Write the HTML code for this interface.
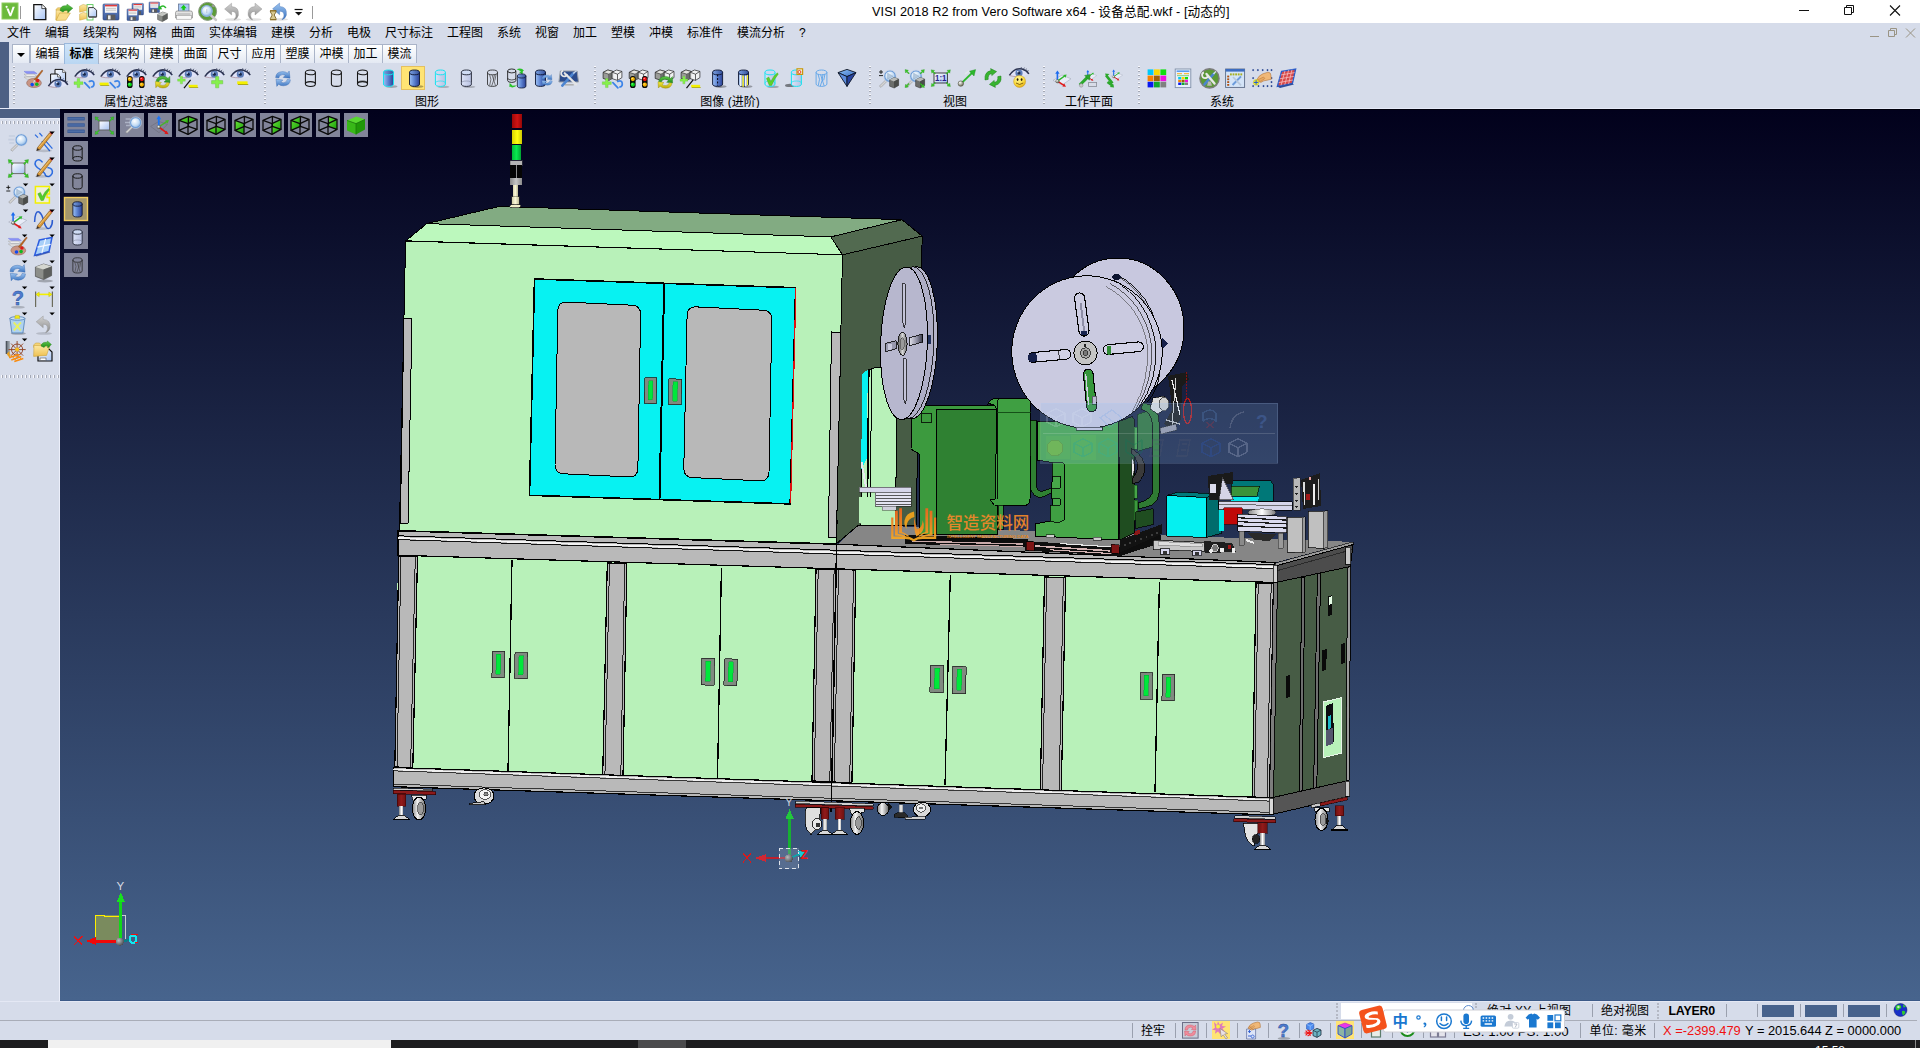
<!DOCTYPE html>
<html lang="zh-CN">
<head>
<meta charset="utf-8">
<title>VISI 2018 R2 from Vero Software x64 - 设备总配.wkf - [动态的]</title>
<style>
html,body{margin:0;padding:0;}
body{width:1920px;height:1048px;position:relative;overflow:hidden;background:#d6dcea;
 font-family:"Liberation Sans","Noto Sans CJK SC",sans-serif;font-size:12px;color:#000;}
.abs{position:absolute;}
#titlebar{position:absolute;left:0;top:0;width:1920px;height:23px;background:#fff;}
#title{position:absolute;left:872px;top:4px;width:358px;height:17px;line-height:17px;font-size:12.68px;white-space:nowrap;letter-spacing:0.1px;}
#menubar{position:absolute;left:0;top:23px;width:1920px;height:20px;background:#d6dcea;}
#menubar span{position:absolute;top:2px;height:16px;line-height:16px;font-size:12px;white-space:nowrap;}
#leftstrip{position:absolute;left:0;top:42px;width:9px;height:67px;background:#4d6084;}
#leftstrip2{position:absolute;left:0;top:109px;width:60px;height:9px;background:#4d6084;}
#tabs{position:absolute;left:12px;top:44px;height:20px;}
.tab{position:absolute;top:44px;height:19px;border:1px solid #aab4c8;border-bottom:none;background:linear-gradient(#ffffff,#e4e9f3);font-size:12px;line-height:19px;text-align:center;box-sizing:border-box;white-space:nowrap;}
.tab.sel{background:linear-gradient(#cfe4f9,#b9d6f2);border-color:#9ab8dc;top:43px;height:21px;line-height:20px;font-weight:bold;}
#ribbon{position:absolute;left:12px;top:64px;width:1908px;height:44px;background:#d6dcea;}
.glabel{position:absolute;top:94.5px;height:15px;line-height:15px;font-size:12px;text-align:center;white-space:nowrap;}
.gsep{position:absolute;top:66px;width:2px;height:40px;background:repeating-linear-gradient(180deg,#f8f8fc 0,#f8f8fc 1px,#a4a8b4 1px,#a4a8b4 2.500px,transparent 2.500px,transparent 4px);}
#viewport{position:absolute;left:60px;top:109px;width:1860px;height:892px;background:linear-gradient(#02011c 0%,#47648d 100%);overflow:hidden;box-sizing:border-box;border-top:1px solid #00000c;border-bottom:1px solid #3c5a88;}
#vline{position:absolute;left:0;top:108px;width:1920px;height:1px;background:#e6eaf8;}
#leftpanel{position:absolute;left:0;top:118px;width:60px;height:883px;background:#d6dcea;border-top:1px solid #e4e8f6;border-right:1px solid #eceffa;box-sizing:border-box;}
.grip{position:absolute;left:1px;width:58px;height:3px;background:repeating-linear-gradient(90deg,#f8f8fc 0,#f8f8fc 1px,#a4a8b4 1px,#a4a8b4 2.500px,transparent 2.500px,transparent 4px);}
#status{position:absolute;left:0;top:1001px;width:1920px;height:39px;background:#d6dcea;}
#statusin{position:absolute;left:0;top:-1px;width:1920px;height:40px;}
#taskbar{position:absolute;left:0;top:1040px;width:1920px;height:8px;background:#1d1d1f;}
.vt{position:absolute;width:24px;height:24px;background:#82859a;}
svg{display:block;}
</style>
</head>
<body>
<div id="titlebar"><div id="title">VISI 2018 R2 from Vero Software x64 - 设备总配.wkf - [动态的]</div></div>
<div id="menubar"><span style="left:7px">文件</span><span style="left:45px">编辑</span><span style="left:83px">线架构</span><span style="left:133px">网格</span><span style="left:171px">曲面</span><span style="left:209px">实体编辑</span><span style="left:271px">建模</span><span style="left:309px">分析</span><span style="left:347px">电极</span><span style="left:385px">尺寸标注</span><span style="left:447px">工程图</span><span style="left:497px">系统</span><span style="left:535px">视窗</span><span style="left:573px">加工</span><span style="left:611px">塑模</span><span style="left:649px">冲模</span><span style="left:687px">标准件</span><span style="left:737px">模流分析</span><span style="left:799px">?</span></div>
<div id="leftstrip"></div><div id="leftstrip2"></div>
<div class="tab" style="left:12px;width:18px"><svg width="16" height="18" viewBox="0 0 16 18"><path d="M4 8h8l-4 4z" fill="#000"/></svg></div>
<div class="tab" style="left:30px;width:35px">编辑</div>
<div class="tab sel" style="left:64px;width:35px">标准</div>
<div class="tab" style="left:98px;width:47px">线架构</div>
<div class="tab" style="left:144px;width:35px">建模</div>
<div class="tab" style="left:178px;width:35px">曲面</div>
<div class="tab" style="left:212px;width:35px">尺寸</div>
<div class="tab" style="left:246px;width:35px">应用</div>
<div class="tab" style="left:280px;width:35px">塑膜</div>
<div class="tab" style="left:314px;width:35px">冲模</div>
<div class="tab" style="left:348px;width:35px">加工</div>
<div class="tab" style="left:382px;width:35px">模流</div>
<div id="ribbon"></div>
<div class="glabel" style="left:76px;width:120px">属性/过滤器</div>
<div class="glabel" style="left:367px;width:120px">图形</div>
<div class="glabel" style="left:670px;width:120px">图像 (进阶)</div>
<div class="glabel" style="left:895px;width:120px">视图</div>
<div class="glabel" style="left:1029px;width:120px">工作平面</div>
<div class="glabel" style="left:1162px;width:120px">系统</div>
<div class="gsep" style="left:13px"></div>
<div class="gsep" style="left:264px"></div>
<div class="gsep" style="left:594px"></div>
<div class="gsep" style="left:869px"></div>
<div class="gsep" style="left:1043px"></div>
<div class="gsep" style="left:1138px"></div>
<div id="vline"></div>
<div id="leftpanel"><div class="grip" style="top:2px"></div><div class="grip" style="top:255.5px"></div></div>
<div id="viewport">
<svg id="model" width="1920" height="1048" viewBox="0 0 1920 1048" style="position:absolute;left:-60px;top:-110px" shape-rendering="crispEdges">
<defs>
<linearGradient id="redg" x1="0" x2="1"><stop offset="0" stop-color="#6a1010"/><stop offset="0.5" stop-color="#921a1a"/><stop offset="1" stop-color="#701212"/></linearGradient>
<linearGradient id="stemg" x1="0" x2="1"><stop offset="0" stop-color="#999"/><stop offset="0.5" stop-color="#fff"/><stop offset="1" stop-color="#aaa"/></linearGradient>
<linearGradient id="whg" x1="0" x2="1"><stop offset="0" stop-color="#8a8a8a"/><stop offset="0.4" stop-color="#f4f4f4"/><stop offset="1" stop-color="#6a6a6a"/></linearGradient>
<linearGradient id="axg" x1="0" x2="1"><stop offset="0" stop-color="#e8e8f2"/><stop offset="0.6" stop-color="#8c8ca0"/><stop offset="1" stop-color="#3a3a48"/></linearGradient>
<linearGradient id="hubg" x1="0" x2="1"><stop offset="0" stop-color="#555"/><stop offset="0.5" stop-color="#d8d8d8"/><stop offset="1" stop-color="#666"/></linearGradient>
<linearGradient id="rollg" x1="0" x2="1"><stop offset="0" stop-color="#888"/><stop offset="0.5" stop-color="#fff"/><stop offset="1" stop-color="#777"/></linearGradient>
<linearGradient id="tred" x1="0" x2="1"><stop offset="0" stop-color="#a00808"/><stop offset="0.5" stop-color="#d01414"/><stop offset="1" stop-color="#900606"/></linearGradient>
<linearGradient id="tyel" x1="0" x2="1"><stop offset="0" stop-color="#d8d400"/><stop offset="0.5" stop-color="#ffff10"/><stop offset="1" stop-color="#c8c400"/></linearGradient>
<linearGradient id="tgrn" x1="0" x2="1"><stop offset="0" stop-color="#00b838"/><stop offset="0.5" stop-color="#08e850"/><stop offset="1" stop-color="#00a030"/></linearGradient>
<linearGradient id="tgry" x1="0" x2="1"><stop offset="0" stop-color="#888"/><stop offset="0.5" stop-color="#c8c8c8"/><stop offset="1" stop-color="#888"/></linearGradient>
<linearGradient id="tcrm" x1="0" x2="1"><stop offset="0" stop-color="#cfcba4"/><stop offset="0.5" stop-color="#fbf8d8"/><stop offset="1" stop-color="#bfbb98"/></linearGradient>
<linearGradient id="wmg" x1="0" x2="0" y1="0" y2="1"><stop offset="0" stop-color="#f07020"/><stop offset="1" stop-color="#f5a820"/></linearGradient>
<linearGradient id="wmg2" gradientUnits="userSpaceOnUse" x1="0" y1="508" x2="0" y2="540"><stop offset="0" stop-color="#f0641c"/><stop offset="0.6" stop-color="#f28a20"/><stop offset="1" stop-color="#f6ac24"/></linearGradient>
<radialGradient id="sph" cx="0.35" cy="0.35" r="0.7"><stop offset="0" stop-color="#b8bcc0"/><stop offset="1" stop-color="#4a4e54"/></radialGradient>
</defs>
<polygon points="837.8,544.3 858.6,525 1353,541.9 1275,562.5" fill="#868686"/>
<polygon points="842.5,254.8 922.2,236.1 916,525 858.6,525 836.3,543.8" fill="#475c45" stroke="#000" stroke-width="1"/>
<path d="M861 525 L863 385 Q863.5 368 880 367 L897 367 L895.6 525 Z" fill="#b8f1b9" stroke="#000" stroke-width="1"/>
<polygon points="862.2,374 867.8,369.5 866.7,459 861.2,470" fill="#07f2f2"/>
<polyline points="868.8,369 867.5,500" fill="none" stroke="#000" stroke-width="1.6"/>
<polyline points="871.6,368 870.4,497" fill="none" stroke="#000" stroke-width="1"/>
<polygon points="859,497 889,497 889,523.4 858.7,523.4" fill="#b8f1b9"/>
<rect x="859" y="487" width="52" height="5" fill="#d6d6ea" stroke="#333" stroke-width="0.6"/>
<rect x="875" y="492" width="36" height="14" fill="#e4e4f2" stroke="#222" stroke-width="0.6"/>
<polyline points="876,495 911,495" fill="none" stroke="#333" stroke-width="0.8"/>
<polyline points="876,498 911,498" fill="none" stroke="#333" stroke-width="0.8"/>
<polyline points="876,501 911,501" fill="none" stroke="#333" stroke-width="0.8"/>
<polyline points="876,504 911,504" fill="none" stroke="#333" stroke-width="0.8"/>
<rect x="882" y="506" width="14" height="4" fill="#d0d0dc" stroke="#444" stroke-width="0.5"/>
<polyline points="861.5,462 866,487" fill="none" stroke="#e8e8f0" stroke-width="2"/>
<polygon points="499.4,206.4 901.9,219.7 830.8,236.9 426.7,223.6" fill="#82ab82" stroke="#000" stroke-width="1"/>
<polygon points="426.7,223.6 830.8,236.9 842.5,254.8 405.8,240.8" fill="#bcf8bd" stroke="#000" stroke-width="1"/>
<polygon points="830.8,236.9 901.9,219.7 922.2,236.1 842.5,254.8" fill="#526a50" stroke="#000" stroke-width="1"/>
<polygon points="405.6,241 842.5,254.8 836.3,543.8 399.4,530.5" fill="#b8f1b9" stroke="#000" stroke-width="1"/>
<polygon points="404,318 412,318.3 408,523.6 400.3,523.4" fill="#b9b9b9" stroke="#000" stroke-width="1"/>
<polygon points="831.5,332 841,332.3 836.4,537.5 828.4,537.3" fill="#b9b9b9" stroke="#000" stroke-width="1"/>
<polygon points="534.5,279 795.6,287.7 790.2,503.9 529.5,495.3" fill="#07f2f2" stroke="#000" stroke-width="1.6"/>
<polyline points="795.9,288 790.6,503.5" fill="none" stroke="#e01010" stroke-width="1.2"/>
<polyline points="664.2,283.3 659.5,499.6" fill="none" stroke="#000" stroke-width="2"/>
<path d="M557.8 310.7 Q558.0 301.7 567.0 302.1 L631.8 305.2 Q640.8 305.6 640.6 314.6 L637.9 468.3 Q637.7 477.3 628.7 476.9 L563.8 473.8 Q554.8 473.4 555.0 464.4 Z" fill="#b8b8b8" stroke="#000" stroke-width="1"/>
<path d="M687.1 315.4 Q687.3 306.4 696.3 306.9 L763.0 310.2 Q772.0 310.7 771.8 319.7 L769.0 472.2 Q768.8 481.2 759.8 480.8 L692.6 477.6 Q683.6 477.2 683.8 468.2 Z" fill="#b8b8b8" stroke="#000" stroke-width="1"/>
<polygon points="644.8,377.5 656.8,377.9 656.3,403.8 644.3,403.4" fill="#808a80" stroke="#222" stroke-width="0.8"/>
<polygon points="648.64,380.5 652.96,380.5 652.46,399.8 648.14,399.8" fill="#00e83a" stroke="#0a3" stroke-width="0.5"/>
<polygon points="669,378.8 681.8,379.2 681.3,405 668.5,404.6" fill="#808a80" stroke="#222" stroke-width="0.8"/>
<polygon points="673.096,381.8 677.704,381.8 677.204,401 672.596,401" fill="#00e83a" stroke="#0a3" stroke-width="0.5"/>
<polygon points="398,553.2 1273,580.413 1270,799.722 394.5,769.517" fill="#b8f1b9"/>
<polyline points="512,560 508,772" fill="none" stroke="#000" stroke-width="1.3"/>
<polyline points="721.4,568 717.5,778" fill="none" stroke="#000" stroke-width="1.3"/>
<polyline points="950.3,575 945,785" fill="none" stroke="#000" stroke-width="1.3"/>
<polyline points="1159.4,582 1155,792" fill="none" stroke="#000" stroke-width="1.3"/>
<polygon points="398.75,556 417.5,556.5 412.8,767.5 394.8,767" fill="#b9b9b9" stroke="#000" stroke-width="1.2"/>
<polyline points="400.95,556 397,767" fill="none" stroke="#000" stroke-width="0.8"/>
<polyline points="415.3,556 410.6,767" fill="none" stroke="#000" stroke-width="0.8"/>
<polygon points="607.3,563 626.9,563.5 623,776.5 602.7,776" fill="#b9b9b9" stroke="#000" stroke-width="1.2"/>
<polyline points="609.5,563 604.9,776" fill="none" stroke="#000" stroke-width="0.8"/>
<polyline points="624.7,563 620.8,776" fill="none" stroke="#000" stroke-width="0.8"/>
<polygon points="816,569 836.3,569.5 832,781.5 812,781" fill="#b9b9b9" stroke="#000" stroke-width="1.2"/>
<polyline points="818.2,569 814.2,781" fill="none" stroke="#000" stroke-width="0.8"/>
<polyline points="834.1,569 829.8,781" fill="none" stroke="#000" stroke-width="0.8"/>
<polygon points="836.3,569.5 855.8,570 851.9,782.5 832,782" fill="#b9b9b9" stroke="#000" stroke-width="1.2"/>
<polyline points="838.5,569.5 834.2,782" fill="none" stroke="#000" stroke-width="0.8"/>
<polyline points="853.6,569.5 849.7,782" fill="none" stroke="#000" stroke-width="0.8"/>
<polygon points="1044.5,577 1065.6,577.5 1061.3,790.5 1040.3,790" fill="#b9b9b9" stroke="#000" stroke-width="1.2"/>
<polyline points="1046.7,577 1042.5,790" fill="none" stroke="#000" stroke-width="0.8"/>
<polyline points="1063.4,577 1059.1,790" fill="none" stroke="#000" stroke-width="0.8"/>
<polygon points="1256,583 1273.4,583.5 1269.5,797.5 1252.3,797" fill="#b9b9b9" stroke="#000" stroke-width="1.2"/>
<polyline points="1258.2,583 1254.5,797" fill="none" stroke="#000" stroke-width="0.8"/>
<polyline points="1271.2,583 1267.3,797" fill="none" stroke="#000" stroke-width="0.8"/>
<polygon points="492.5,651 505,651.4 504.4,678 491.9,677.6" fill="#808a80" stroke="#222" stroke-width="0.8"/>
<polygon points="496.5,654 501,654 500.4,674 495.9,674" fill="#00e83a" stroke="#0a3" stroke-width="0.5"/>
<polygon points="515,652.5 527.6,652.9 527,678.8 514.4,678.4" fill="#808a80" stroke="#222" stroke-width="0.8"/>
<polygon points="519.032,655.5 523.568,655.5 522.968,674.8 518.432,674.8" fill="#00e83a" stroke="#0a3" stroke-width="0.5"/>
<polygon points="701.9,658 714.7,658.4 714.1,685.3 701.3,684.9" fill="#808a80" stroke="#222" stroke-width="0.8"/>
<polygon points="705.996,661 710.604,661 710.004,681.3 705.396,681.3" fill="#00e83a" stroke="#0a3" stroke-width="0.5"/>
<polygon points="724.5,658.8 737.5,659.2 736.9,685.8 723.9,685.4" fill="#808a80" stroke="#222" stroke-width="0.8"/>
<polygon points="728.66,661.8 733.34,661.8 732.74,681.8 728.06,681.8" fill="#00e83a" stroke="#0a3" stroke-width="0.5"/>
<polygon points="930.5,665 943.9,665.4 943.3,692.8 929.9,692.4" fill="#808a80" stroke="#222" stroke-width="0.8"/>
<polygon points="934.788,668 939.612,668 939.012,688.8 934.188,688.8" fill="#00e83a" stroke="#0a3" stroke-width="0.5"/>
<polygon points="953,666.2 966.2,666.6 965.6,694 952.4,693.6" fill="#808a80" stroke="#222" stroke-width="0.8"/>
<polygon points="957.224,669.2 961.976,669.2 961.376,690 956.624,690" fill="#00e83a" stroke="#0a3" stroke-width="0.5"/>
<polygon points="1140.6,672.3 1152.6,672.7 1152,699.5 1140,699.1" fill="#808a80" stroke="#222" stroke-width="0.8"/>
<polygon points="1144.44,675.3 1148.76,675.3 1148.16,695.5 1143.84,695.5" fill="#00e83a" stroke="#0a3" stroke-width="0.5"/>
<polygon points="1162.5,674 1175,674.4 1174.4,701 1161.9,700.6" fill="#808a80" stroke="#222" stroke-width="0.8"/>
<polygon points="1166.5,677 1171,677 1170.4,697 1165.9,697" fill="#00e83a" stroke="#0a3" stroke-width="0.5"/>
<polygon points="398,530.939 836.5,544.313 838,544.3 1275,562.5 1275.5,582.49 398,555.2" fill="#b9b9b9" stroke="#000" stroke-width="1.2"/>
<polyline points="398,535.8 1275,564.629" fill="none" stroke="#000" stroke-width="1"/>
<polyline points="398,538 1275,567.029" fill="none" stroke="#f4f4f4" stroke-width="1.8"/>
<polyline points="398,539.6 1275,568.629" fill="none" stroke="#000" stroke-width="0.9"/>
<polygon points="393.5,767.483 1271,797.756 1271.5,814.868 393.5,786.684" fill="#b9b9b9" stroke="#000" stroke-width="1.2"/>
<polyline points="393.5,769.483 1271,799.756" fill="none" stroke="#f0f0f0" stroke-width="1.4"/>
<polyline points="393.5,770.883 1271,801.156" fill="none" stroke="#000" stroke-width="0.7"/>
<polyline points="393.5,784.184 1271,812.352" fill="none" stroke="#000" stroke-width="0.7"/>
<polyline points="837,520 831,812" fill="none" stroke="#000" stroke-width="1.2"/>
<polygon points="1275,563.2 1353,541.9 1353,545.2 1275.3,566.3" fill="#9a9a9a" stroke="#000" stroke-width="0.6"/>
<polygon points="1275.3,566 1353,544.6 1350.3,566.5 1276.6,582.3" fill="#4c4c4c" stroke="#000" stroke-width="1"/>
<polyline points="1276,571 1352,549.6" fill="none" stroke="#2a2a2a" stroke-width="1"/>
<polygon points="1276.6,582.3 1350.3,566.5 1348.4,780.5 1272,797.7" fill="#475c45" stroke="#000" stroke-width="1"/>
<polygon points="1301.8,577.5 1305,576.6 1302,791 1299.2,791.8" fill="#6e6e6e" stroke="#000" stroke-width="1"/>
<polygon points="1317.4,574 1320.6,573 1316.8,787.5 1313.6,788.4" fill="#6e6e6e" stroke="#000" stroke-width="1"/>
<polygon points="1347.5,567 1350.8,566.3 1349,780.4 1346,781.2" fill="#9c9c9c" stroke="#000" stroke-width="0.9"/>
<polygon points="1273.4,583 1277.5,582.2 1273.5,797.4 1269.5,797.6" fill="#7d7d7d" stroke="#000" stroke-width="0.9"/>
<polygon points="1271.9,797.7 1348.4,780.5 1347.7,796.9 1272,814.5" fill="#555" stroke="#000" stroke-width="1"/>
<rect x="1345.5" y="547" width="5" height="17" fill="#c9c9c9" stroke="#000" stroke-width="0.7"/>
<rect x="1345" y="781" width="4.5" height="15" fill="#c9c9c9" stroke="#000" stroke-width="0.7"/>
<rect x="1269" y="798" width="4" height="16" fill="#d8d8d8" stroke="#000" stroke-width="0.7"/>
<rect x="1273" y="565" width="4" height="17" fill="#d0d0d0" stroke="#000" stroke-width="0.7"/>
<polygon points="1323.4,702 1341.6,697.6 1341.6,753 1323.4,757.8" fill="#b8f1b9" stroke="#e8f4e8" stroke-width="1"/>
<polygon points="1326,706 1333,703 1334,742 1326.5,745" fill="#0c0c10"/>
<polygon points="1328,716 1331,715 1331,728 1328,729" fill="#19b8c8"/>
<polygon points="1326,730 1332.5,728 1332.5,744 1326,746" fill="#54566e"/>
<polygon points="1328.5,596 1332.5,595 1331.5,615 1327.5,616" fill="#0a0a0a"/>
<polygon points="1329.3,597 1331.8,596.4 1331.5,604 1329.3,604.6" fill="#e8ffe8"/>
<polygon points="1322.5,650 1327,649 1326,670 1321.8,671" fill="#0a0a0a"/>
<polygon points="1341,644 1345,643 1344.5,663 1340.5,664" fill="#0a0a0a"/>
<polygon points="1286,676 1290,675 1289.5,697 1285.5,698" fill="#0a0a0a"/>
<polygon points="393,788 432,789.3 432,791 393,790" fill="#cfcfcf" stroke="#000" stroke-width="0.6"/>
<polygon points="393,790.3 435.5,791.575 435.5,794.875 393,793.6" fill="#8c1a1a" stroke="#200" stroke-width="0.6"/>
<rect x="397" y="794" width="8.8" height="12" fill="url(#redg)" stroke="#300" stroke-width="0.5"/>
<rect x="399.464" y="806" width="3.872" height="9" fill="url(#stemg)"/>
<polygon points="394,819 398.76,815 404.04,815 408.8,819" fill="#d8d8d8" stroke="#000" stroke-width="0.8"/>
<polyline points="393,819.5 409.8,819.5" fill="none" stroke="#000" stroke-width="1.4"/>
<path d="M411 795 h15 v4 h-3 v3 h-9 z" fill="#e2e2e2" stroke="#000" stroke-width="0.7"/>
<ellipse cx="419" cy="808.5" rx="6.6" ry="11.5" fill="url(#whg)" stroke="#000" stroke-width="1"/>
<ellipse cx="420.5" cy="808.5" rx="2.97" ry="6.325" fill="#9a9a9a" stroke="#222" stroke-width="0.6"/>
<ellipse cx="484" cy="796" rx="10" ry="8.2" fill="#dcdcdc" stroke="#000" stroke-width="1"/>
<ellipse cx="485" cy="794.5" rx="5.8" ry="4.8" fill="#f4f4f4" stroke="#333" stroke-width="0.8"/>
<ellipse cx="486" cy="794" rx="2.2" ry="2" fill="#888" stroke="#222" stroke-width="0.5"/>
<polygon points="469.5,803.3 484,801.5 486,804.5 470,805" fill="#c8c8c8" stroke="#000" stroke-width="0.8"/>
<polygon points="795.5,801 873,803.8 873,806 795.5,803.6" fill="#d0d0d0" stroke="#000" stroke-width="0.6"/>
<polygon points="795,804.2 873,806.54 873,809.34 795,807" fill="#8c1a1a" stroke="#200" stroke-width="0.6"/>
<path d="M806 807.5 h14 v5 q1 14 -9 22 q-7 -6 -6 -20 z" fill="#dedede" stroke="#000" stroke-width="0.8"/>
<ellipse cx="817" cy="824" rx="4.5" ry="6" fill="#e8e8e8" stroke="#000" stroke-width="0.8"/>
<ellipse cx="818" cy="825" rx="2" ry="2.6" fill="#333"/>
<rect x="821" y="807.6" width="7.8" height="11.5" fill="url(#redg)" stroke="#300" stroke-width="0.5"/>
<rect x="823.184" y="819.1" width="3.432" height="11" fill="url(#stemg)"/>
<polygon points="818,834.1 822.56,830.1 827.24,830.1 831.8,834.1" fill="#d8d8d8" stroke="#000" stroke-width="0.8"/>
<polyline points="817,834.6 832.8,834.6" fill="none" stroke="#000" stroke-width="1.4"/>
<rect x="835" y="807.6" width="9" height="11.5" fill="url(#redg)" stroke="#300" stroke-width="0.5"/>
<rect x="837.52" y="819.1" width="3.96" height="11" fill="url(#stemg)"/>
<polygon points="832,834.1 836.8,830.1 842.2,830.1 847,834.1" fill="#d8d8d8" stroke="#000" stroke-width="0.8"/>
<polyline points="831,834.6 848,834.6" fill="none" stroke="#000" stroke-width="1.4"/>
<path d="M849 808 h15 v4 h-3 v3 h-9 z" fill="#e2e2e2" stroke="#000" stroke-width="0.7"/>
<ellipse cx="857" cy="823" rx="6.6" ry="11.5" fill="url(#whg)" stroke="#000" stroke-width="1"/>
<ellipse cx="858.5" cy="823" rx="2.97" ry="6.325" fill="#9a9a9a" stroke="#222" stroke-width="0.6"/>
<ellipse cx="883" cy="809" rx="5.6" ry="6.5" fill="url(#whg)" stroke="#000" stroke-width="0.9"/>
<polygon points="888,803 893,807 888,811" fill="#111"/>
<rect x="899.3" y="804.5" width="3.6" height="8.5" fill="#e0e0e0" stroke="#666" stroke-width="0.4"/>
<polygon points="894,814.7 898,812.5 904,812.5 907.5,815.5 907.5,817.8 894,817.4" fill="#2a2a2a" stroke="#000" stroke-width="0.6"/>
<ellipse cx="922" cy="809.5" rx="8.6" ry="7.4" fill="#dadada" stroke="#000" stroke-width="1"/>
<ellipse cx="921" cy="808" rx="4.8" ry="4.2" fill="#f2f2f2" stroke="#333" stroke-width="0.8"/>
<ellipse cx="921" cy="808" rx="1.8" ry="1.6" fill="#777"/>
<polygon points="905,817.5 925,816 925,819 905,819.4" fill="#d0d0d0" stroke="#000" stroke-width="0.6"/>
<polygon points="1234.5,815.5 1275,817 1275,819.4 1234.5,818" fill="#d0d0d0" stroke="#000" stroke-width="0.6"/>
<polygon points="1233.6,818.6 1275.8,819.866 1275.8,822.866 1233.6,821.6" fill="#8c1a1a" stroke="#200" stroke-width="0.6"/>
<path d="M1243 823 h16 v5 q0 6 -4 8 l-1 10 q-9 -4 -9.5 -17 z" fill="#e4e4e4" stroke="#000" stroke-width="0.8"/>
<ellipse cx="1256" cy="839" rx="3.6" ry="4.4" fill="#222" stroke="#000" stroke-width="0.6"/>
<rect x="1257.8" y="822.7" width="9.4" height="10.5" fill="url(#redg)" stroke="#300" stroke-width="0.5"/>
<rect x="1260.43" y="833.2" width="4.136" height="12" fill="url(#stemg)"/>
<polygon points="1254.8,849.2 1259.68,845.2 1265.32,845.2 1270.2,849.2" fill="#d8d8d8" stroke="#000" stroke-width="0.8"/>
<polyline points="1253.8,849.7 1271.2,849.7" fill="none" stroke="#000" stroke-width="1.4"/>
<polygon points="1311,805 1347.5,796.5 1347.5,799.5 1311,808" fill="#c9c9c9" stroke="#000" stroke-width="0.6"/>
<polygon points="1320,803 1347,797 1347,800 1320,806" fill="#8c1a1a" stroke="#200" stroke-width="0.5"/>
<path d="M1314 807.5 h15 v4 h-3 v3 h-9 z" fill="#e2e2e2" stroke="#000" stroke-width="0.7"/>
<ellipse cx="1321.5" cy="819.5" rx="6.5" ry="11" fill="url(#whg)" stroke="#000" stroke-width="1"/>
<ellipse cx="1323" cy="819.5" rx="2.925" ry="6.05" fill="#9a9a9a" stroke="#222" stroke-width="0.6"/>
<polygon points="1326,818 1330,821 1326,824" fill="#111"/>
<rect x="1335" y="805.5" width="8.8" height="10" fill="url(#redg)" stroke="#300" stroke-width="0.5"/>
<rect x="1337.46" y="815.5" width="3.872" height="10" fill="url(#stemg)"/>
<polygon points="1332,829.5 1336.76,825.5 1342.04,825.5 1346.8,829.5" fill="#d8d8d8" stroke="#000" stroke-width="0.8"/>
<polyline points="1331,830 1347.8,830" fill="none" stroke="#000" stroke-width="1.4"/>
<polygon points="905,535 1028,539 1028,547 905,544" fill="#0c0c0c"/>
<polyline points="912,541.2 1023,544" fill="none" stroke="#c9a9a9" stroke-width="1.4"/>
<polyline points="940,544.5 1023,546.6" fill="none" stroke="#c9a9a9" stroke-width="1"/>
<path d="M912 414 L912.5 405.5 L997 405 L997 534.5 L935 534.5 L919 534 L919 454 L911 449 L911.5 432 Z" fill="#3c9a3e" stroke="#000" stroke-width="1"/>
<polygon points="936,409 997,409 997,534.5 936,534.5" fill="#2f8132" stroke="#000" stroke-width="1"/>
<rect x="921.5" y="413" width="10" height="9" fill="#3c9a3e" stroke="#000" stroke-width="0.8"/>
<polyline points="936,409 936,534" fill="none" stroke="#000" stroke-width="1"/>
<path d="M988 404 Q990 398.5 998 398 L1029 398 Q1031 399 1031 404 L1030 500 Q1029 505.5 1024 505.5 L994 505 L990.5 500 L995 499 L997 410 Q995 403 988 404 Z" fill="#3f9f42" stroke="#000" stroke-width="1"/>
<polyline points="998,398.5 997,499" fill="none" stroke="#000" stroke-width="0.9"/>
<polyline points="997,412 1031,412.5" fill="none" stroke="#0b3d0e" stroke-width="0.8"/>
<rect x="998" y="505" width="5" height="24" fill="#3c9a3e" stroke="#000" stroke-width="0.7"/>
<polygon points="1025,541 1118,547 1161,534.5 1161,543 1120,556 1025,550.5" fill="#0e0e0e"/>
<polyline points="1035,546 1110,550.8" fill="none" stroke="#d5b5b5" stroke-width="1.6"/>
<polyline points="1050,549.8 1112,553.6" fill="none" stroke="#d5b5b5" stroke-width="1.1"/>
<polyline points="1060,543.6 1113,547" fill="none" stroke="#e8e8e8" stroke-width="1.1"/>
<polygon points="1026,541.5 1034,542 1034,550.8 1026,550.3" fill="#7d1414" stroke="#000" stroke-width="0.6"/>
<polygon points="1111,544.2 1119,544.8 1119,553.6 1111,553" fill="#7d1414" stroke="#000" stroke-width="0.6"/>
<polygon points="1134,532 1140,530.5 1140,534.5 1134,536" fill="#7d1414"/>
<polygon points="1118.6,421.5 1132.5,416.5 1134,419 1134,533 1120,540" fill="#1f4d20" stroke="#000" stroke-width="0.9"/>
<rect x="1134" y="427" width="3.4" height="22" fill="#46a548" stroke="#0a3a0c" stroke-width="0.5"/>
<rect x="1134" y="485" width="3.2" height="13" fill="#46a548" stroke="#0a3a0c" stroke-width="0.5"/>
<rect x="1134" y="500" width="3.6" height="20" fill="#3c9a3e" stroke="#0a3a0c" stroke-width="0.5"/>
<polygon points="1135.7,512 1153,508.5 1153,524.5 1135.7,528.5" fill="#1f4d20" stroke="#000" stroke-width="0.7"/>
<polygon points="1120,540 1161.5,524.3 1161.5,534 1120,552.5" fill="#121212"/>
<rect x="1124" y="544.4" width="1.6" height="1.6" fill="#3c3c3c"/>
<rect x="1129.4" y="542.35" width="1.6" height="1.6" fill="#3c3c3c"/>
<rect x="1134.8" y="540.3" width="1.6" height="1.6" fill="#3c3c3c"/>
<rect x="1140.2" y="538.25" width="1.6" height="1.6" fill="#3c3c3c"/>
<rect x="1145.6" y="536.2" width="1.6" height="1.6" fill="#3c3c3c"/>
<rect x="1151" y="534.15" width="1.6" height="1.6" fill="#3c3c3c"/>
<rect x="1156.4" y="532.1" width="1.6" height="1.6" fill="#3c3c3c"/>
<polygon points="1134.5,531.4 1140,529.6 1140,534 1134.5,535.8" fill="#8c1818"/>
<path d="M1030 420 L1036 420 L1036 486 Q1038 494 1046 490 L1051 488 L1051 493 Q1036 503 1031 490 Z" fill="#2f8132" stroke="#000" stroke-width="0.8"/>
<path d="M1037 421 L1118.6 421.5 L1118.6 540 L1035.3 536 L1035.3 524 L1050 521 L1050 505.4 L1052 505.4 L1052 498.6 L1051.6 488 L1052.4 476 L1052.4 462.5 L1037 460 Z" fill="#47a649" stroke="#000" stroke-width="1"/>
<polygon points="1052.4,462.5 1062.5,462.8 1064.6,465 1064.4,520 1058,523 1050,521 1050,505.4 1060,505.4 1060,498.6 1051.6,498.6 1051.6,488 1060.4,488 1060.4,476 1052.4,476" fill="#3f9f42" stroke="#000" stroke-width="0.8"/>
<polyline points="1060.4,476 1060.4,488" fill="none" stroke="#000" stroke-width="0.7"/>
<polyline points="1060,498.6 1060,505.4" fill="none" stroke="#000" stroke-width="0.7"/>
<polyline points="1064.5,465 1064.4,520" fill="none" stroke="#000" stroke-width="0.8"/>
<rect x="1046" y="534.5" width="8" height="3" fill="#cfcfcf" stroke="#000" stroke-width="0.5"/>
<rect x="1093" y="537" width="8" height="3" fill="#cfcfcf" stroke="#000" stroke-width="0.5"/>
<rect x="1076" y="426.6" width="26" height="2.6" fill="#46a548" stroke="#000" stroke-width="0.6"/>
<polygon points="1137.5,414 1152.5,409 1152.5,446.5 1137.5,451" fill="#2f7435" stroke="#0a2a0c" stroke-width="0.8"/>
<path d="M1143 403 Q1158.6 404 1159 422 L1159.4 490 Q1159 504 1148 506.6 L1139 508.6 L1138 503 Q1153 500 1153 488 L1152.6 426 Q1152 412 1141 409 Z" fill="#2f7a33" stroke="#000" stroke-width="0.8"/>
<path d="M1131 448 Q1147 458 1145 470 Q1143 481 1133 484 L1132 479 Q1139 472 1137 462 Q1135 455 1131 453 Z" fill="#3a3a3a" stroke="#000" stroke-width="0.8"/>
<path d="M1131.6 457 Q1137 466 1132 478 Z" fill="#e8e8e8" stroke="#222" stroke-width="0.5"/>
<g transform="rotate(2 908 343)">
<ellipse cx="914" cy="342.5" rx="23.3" ry="76" fill="#b4b4cb" stroke="#000" stroke-width="1"/>
<ellipse cx="910.5" cy="342.5" rx="23.3" ry="76" fill="#aeaec6" stroke="#000" stroke-width="0.8"/>
<ellipse cx="904" cy="343.5" rx="23.4" ry="76.3" fill="#b7b7ce" stroke="#000" stroke-width="1"/>
</g>
<path d="M902.2 284 q1.6 -1.5 3 0 l0.6 38 l-1.4 6 l-1.6 -6 z" fill="#c4c4d8" stroke="#000" stroke-width="0.7"/>
<path d="M903 359 q1.6 -1.8 3 0 l0.8 40 l-1.6 5 l-1.6 -5 z" fill="#c4c4d8" stroke="#000" stroke-width="0.7"/>
<polygon points="885.5,343 896,340.5 896,348.5 885.5,351.5" fill="#9898ae" stroke="#000" stroke-width="0.8"/>
<polygon points="887.5,344.6 892,343.5 892,349.2 887.5,350.4" fill="#c8c8dc"/>
<polygon points="909,337.8 922.5,334.2 922.5,342 909,346" fill="url(#axg)" stroke="#000" stroke-width="0.8"/>
<ellipse cx="902.5" cy="343.8" rx="4.6" ry="11.6" fill="url(#hubg)" stroke="#111" stroke-width="0.9"/>
<ellipse cx="902.3" cy="343.8" rx="2.2" ry="6" fill="#9a9a9a" stroke="#333" stroke-width="0.5"/>
<rect x="927.5" y="335" width="3.6" height="8.5" fill="#20305c"/>
<ellipse cx="1118" cy="328.5" rx="66" ry="70.5" fill="#c8c8df" stroke="#000" stroke-width="1"/>
<path d="M1116 274 Q1165 300 1160 370 Q1158 392 1147 402" fill="none" stroke="#000" stroke-width="0.9"/>
<path d="M1119 277 Q1162 303 1157 368 Q1155 388 1146 398" fill="none" stroke="#333" stroke-width="0.7"/>
<ellipse cx="1116.5" cy="277" rx="4.2" ry="3.2" fill="#0d1430"/>
<polygon points="1162,338 1168,343.5 1162,349" fill="#16204a"/>
<g transform="rotate(-8 1087 352)">
<ellipse cx="1087" cy="352" rx="75.2" ry="76.2" fill="#cacae0" stroke="#000" stroke-width="1"/>
</g>
<path d="M1113.500 280.500 Q1149 300 1155.500 344 Q1158.500 380 1139 407" fill="none" stroke="#000" stroke-width="0.9"/>
<path d="M1110 283.500 Q1145 303 1151.500 345 Q1154 380 1135.500 409.500" fill="none" stroke="#222" stroke-width="0.7"/>
<path d="M1106 286.500 Q1141 306 1147.500 346 Q1150 380 1132 412" fill="none" stroke="#444" stroke-width="0.6"/>
<line x1="1079.6" y1="298" x2="1084" y2="331" stroke="#000" stroke-width="11.2" stroke-linecap="round"/>
<line x1="1079.6" y1="298" x2="1084" y2="331" stroke="#cdcde2" stroke-width="9" stroke-linecap="round"/>
<line x1="1080.6" y1="303" x2="1084.2" y2="331" stroke="#8e8ea6" stroke-width="2"/>
<ellipse cx="1084" cy="333" rx="3.4" ry="2.2" fill="#18244e"/>
<line x1="1108" y1="349.6" x2="1138.5" y2="346.8" stroke="#000" stroke-width="10.8" stroke-linecap="round"/>
<line x1="1108" y1="349.6" x2="1138.5" y2="346.8" stroke="#d2d2e6" stroke-width="8.6" stroke-linecap="round"/>
<path d="M1110 346 a5 5 0 0 0 -1 9 l1 0 z" fill="#2f8a34"/>
<rect x="1107" y="345.6" width="3.6" height="8.6" fill="#2f8a34"/>
<line x1="1033" y1="357.4" x2="1066" y2="354.4" stroke="#000" stroke-width="10.8" stroke-linecap="round"/>
<line x1="1033" y1="357.4" x2="1066" y2="354.4" stroke="#d2d2e6" stroke-width="8.6" stroke-linecap="round"/>
<path d="M1032 353 q-5 1 -4.4 5.5 q0.8 3.6 5.6 3.2 l4 -0.5 l-1 -8.6 z" fill="#16204a"/>
<polyline points="1058,350.6 1060,359" fill="none" stroke="#000" stroke-width="0.7"/>
<line x1="1088.2" y1="374" x2="1091.6" y2="407" stroke="#000" stroke-width="10.8" stroke-linecap="round"/>
<line x1="1088.2" y1="374" x2="1091.6" y2="407" stroke="#35963a" stroke-width="8.6" stroke-linecap="round"/>
<line x1="1085.6" y1="374" x2="1088.6" y2="405" stroke="#cfcfe2" stroke-width="1.4"/>
<rect x="1092" y="396" width="4" height="8" fill="#bdbdd4" stroke="#000" stroke-width="0.5"/>
<ellipse cx="1085.5" cy="353" rx="11.6" ry="11.8" fill="#c4c4c4" stroke="#000" stroke-width="1"/>
<ellipse cx="1085.5" cy="353" rx="5.2" ry="5.2" fill="#a8a8a8" stroke="#222" stroke-width="0.8"/>
<ellipse cx="1085.5" cy="353" rx="2.6" ry="2.6" fill="#777" stroke="#111" stroke-width="0.6"/>
<rect x="1083.6" y="344.4" width="2.4" height="2.4" fill="#222"/>
<rect x="1076" y="427" width="26" height="3" fill="#cacae0" stroke="#000" stroke-width="0.6"/>
<polygon points="1153,398 1164,396 1166,408 1158,414 1150,409" fill="#dcdcdc" stroke="#000" stroke-width="0.7"/>
<ellipse cx="1164" cy="404" rx="5" ry="7" fill="#cfcfcf" stroke="#222" stroke-width="0.7"/>
<polygon points="1168,376 1187,372 1189,380 1182,386 1181,420 1170,428 1164,424 1172,410 1170,390" fill="#1a1a1a"/>
<polyline points="1172,380 1180,415" fill="none" stroke="#eee" stroke-width="1.2"/>
<polyline points="1176,378 1172,425" fill="none" stroke="#ccc" stroke-width="1"/>
<polyline points="1166,420 1180,424" fill="none" stroke="#bbb" stroke-width="1.4"/>
<polyline points="1186,372 1186,398" fill="none" stroke="#a01010" stroke-width="0.8" stroke-dasharray="1.5 1.5"/>
<ellipse cx="1187.5" cy="411" rx="4" ry="12.5" fill="none" stroke="#b01818" stroke-width="1.4"/>
<polygon points="1160,428 1176,424 1177,430 1161,434" fill="#9a9aa8" stroke="#222" stroke-width="0.5"/>
<polygon points="1166.7,495.5 1178.2,492 1217.5,494 1206,497.5" fill="#007c7c" stroke="#000" stroke-width="0.7"/>
<polygon points="1206,497.5 1217.5,494 1221.5,533.4 1206,537.5" fill="#006c6c" stroke="#000" stroke-width="0.7"/>
<polygon points="1166.7,495.5 1206,497.5 1206,537.5 1166.7,536" fill="#05f0f0" stroke="#000" stroke-width="0.8"/>
<polygon points="1231,480.5 1271,480.5 1273,484 1273,501 1231,501" fill="#007878" stroke="#000" stroke-width="0.7"/>
<polygon points="1231,486 1259.5,486 1257,496 1231,496" fill="#3a933a" stroke="#000" stroke-width="0.6"/>
<polygon points="1231,497 1259,497 1258,501.5 1231,501.5" fill="#05e8e8"/>
<polygon points="1208,476 1233,472 1233,484 1226,484 1220,500 1209,500" fill="#1a1a1a"/>
<polygon points="1209.5,484 1216,484 1216,493 1209.5,493" fill="#dcdcec"/>
<polygon points="1222.5,476.5 1234,499.6 1219,499.6" fill="#d4d4e6" stroke="#222" stroke-width="0.6"/>
<polygon points="1218.8,501 1292,502 1292,510.4 1218.8,509.5" fill="#d6d6ea" stroke="#000" stroke-width="0.7"/>
<polyline points="1219,504.5 1292,505.5" fill="none" stroke="#555" stroke-width="0.8"/>
<polygon points="1223.6,507.7 1242,507.7 1242,524 1223.6,524" fill="#c00808" stroke="#400" stroke-width="0.6"/>
<polygon points="1219,509.5 1223.6,509.5 1223.6,531 1219,531" fill="#05e8e8"/>
<ellipse cx="1262" cy="512.5" rx="14" ry="3.6" fill="url(#rollg)" stroke="#333" stroke-width="0.5"/>
<polygon points="1237.8,514 1286.6,516.5 1286.6,533 1237.8,531" fill="#dadaee" stroke="#000" stroke-width="0.7"/>
<polyline points="1238,517.74 1286.6,520.13" fill="none" stroke="#1a1a1a" stroke-width="1.2"/>
<polyline points="1238,521.65 1286.6,523.925" fill="none" stroke="#1a1a1a" stroke-width="1.2"/>
<polyline points="1238,525.9 1286.6,528.05" fill="none" stroke="#1a1a1a" stroke-width="1.2"/>
<polygon points="1239,531 1244,531 1244,545 1239,545" fill="#8a8a8a" stroke="#222" stroke-width="0.5"/>
<polygon points="1278,533 1283,533 1283,548 1278,548" fill="#9a9a9a" stroke="#222" stroke-width="0.5"/>
<polygon points="1248,533 1276,534 1270,541 1254,540" fill="#2a2a2a"/>
<polyline points="1246,540 1254,543" fill="none" stroke="#eee" stroke-width="2"/>
<polygon points="1153,540 1204,542.5 1204,551.5 1153,549.5" fill="#c8c8c8" stroke="#000" stroke-width="0.7"/>
<polygon points="1158,541.5 1202,543.6 1202,547 1158,545" fill="#dedede" stroke="#555" stroke-width="0.4"/>
<rect x="1160.5" y="548.5" width="9" height="5.5" fill="#d8d8ee" stroke="#000" stroke-width="0.7"/>
<rect x="1192.5" y="550" width="9" height="5.5" fill="#d8d8ee" stroke="#000" stroke-width="0.7"/>
<rect x="1163" y="550.5" width="4" height="3" fill="#333"/>
<rect x="1195" y="552" width="4" height="3" fill="#333"/>
<polygon points="1204,541 1232,543 1236,552 1205,553" fill="#1e1e1e"/>
<ellipse cx="1215" cy="548" rx="3.4" ry="3.6" fill="#777" stroke="#ddd" stroke-width="0.8"/>
<ellipse cx="1222" cy="550" rx="2" ry="2.4" fill="#eee"/>
<ellipse cx="1211" cy="551" rx="1.8" ry="2" fill="#eee"/>
<rect x="1228" y="545" width="3" height="4" fill="#a01818"/>
<rect x="1232" y="548" width="3" height="5" fill="#eee"/>
<polygon points="1287,517 1302,517.5 1302,553 1287,552" fill="#c0c0c0" stroke="#000" stroke-width="0.7"/>
<polygon points="1302,517.5 1305,516.8 1305,552 1302,553" fill="#9a9a9a" stroke="#000" stroke-width="0.5"/>
<polygon points="1308,511 1323,511.5 1323,548.5 1308,547.5" fill="#c0c0c0" stroke="#000" stroke-width="0.7"/>
<polygon points="1323,511.5 1327.5,510.5 1327.5,547 1323,548.5" fill="#9a9a9a" stroke="#000" stroke-width="0.5"/>
<polygon points="1293,478.5 1300,477.5 1300.5,510 1293.5,510" fill="#b9b9b9" stroke="#222" stroke-width="0.6"/>
<polygon points="1295,486 1298.5,486 1296.8,488.6" fill="#222"/>
<polygon points="1295,493 1298.5,493 1296.8,495.6" fill="#222"/>
<polygon points="1295,500 1298.5,500 1296.8,502.6" fill="#222"/>
<polygon points="1295,506 1298.5,506 1296.8,508.6" fill="#222"/>
<polygon points="1301,480 1320,473 1321,506 1303,509" fill="#1c1c1c"/>
<polyline points="1304,482 1304.5,505" fill="none" stroke="#ddd" stroke-width="1.4"/>
<polyline points="1314,484 1314,505" fill="none" stroke="#eee" stroke-width="1.6"/>
<polyline points="1318,478 1318.5,500" fill="none" stroke="#ccc" stroke-width="1"/>
<rect x="1306" y="494" width="4" height="6" fill="#a01818"/>
<rect x="1309" y="477" width="2.4" height="3" fill="#e8a0a0"/>
<rect x="512.2" y="113.6" width="10.2" height="14.6" fill="url(#tred)"/>
<rect x="512.2" y="129.6" width="10.2" height="14.4" fill="url(#tyel)"/>
<rect x="511.8" y="144.8" width="9.4" height="15.4" fill="url(#tgrn)"/>
<rect x="510.2" y="160.6" width="12" height="4.4" fill="#b4b4b4" stroke="#555" stroke-width="0.4"/>
<rect x="509.6" y="164.8" width="12.8" height="13.4" fill="#050505"/>
<polyline points="516.4,165 516.4,178" fill="none" stroke="#999" stroke-width="0.9"/>
<rect x="510" y="178" width="12.2" height="6.8" fill="url(#tgry)"/>
<rect x="512.6" y="185.2" width="5.4" height="11.4" fill="url(#tcrm)"/>
<rect x="511.6" y="196.8" width="7.6" height="8" fill="url(#tcrm)" stroke="#443" stroke-width="0.4"/>
<ellipse cx="515.4" cy="206.2" rx="5.6" ry="1.8" fill="#f1eecb" stroke="#222" stroke-width="0.7"/>
<rect x="1040.5" y="403" width="237" height="60.4" fill="#8eb8f2" fill-opacity="0.2"/>
<rect x="1040.5" y="403" width="237" height="60.4" fill="none" stroke="#b8d0f8" stroke-width="1" stroke-opacity="0.18"/>
<polyline points="1043,433 1275,433" fill="none" stroke="#ffffff" stroke-width="1" stroke-opacity="0.15"/>
<g opacity="0.2" fill="none" stroke-width="1.4" stroke-linejoin="round">
<path d="M1056 409 l9 4.05 v9 l-9 4.5 l-9 -4.5 v-9 z M1047 413.05 l9 4.5 l9 -4.5 M1056 417.55 v9" stroke="#dfe6f4"/>
<path d="M1082 409 l9 4.05 v9 l-9 4.5 l-9 -4.5 v-9 z M1073 413.05 l9 4.5 l9 -4.5 M1082 417.55 v9" stroke="#dfe6f4"/>
<path d="M1100 418 l12 -8 l10 8 l-12 9 z M1104 415 l12 9" stroke="#6aa0e8"/>
<path d="M1203 413 q7 -6 13 0 v8 q-6 -5 -13 0 z" stroke="#6aa0e8"/><path d="M1206 422 l8 6 m0 -6 l-8 6" stroke="#e03030"/>
<path d="M1230 428 q2 -14 14 -16" stroke="#c8c8d8"/>
</g>
<text x="1256" y="428" font-family="Liberation Sans,sans-serif" font-weight="bold" font-size="19" fill="#5a84d8" opacity="0.3">?</text>
<g opacity="0.24" fill="none" stroke-width="1.4" stroke-linejoin="round">
<rect x="1046" y="436" width="24" height="23" fill="#7ed957" opacity="0.5"/>
<rect x="1071" y="435" width="25" height="25" fill="#7ed957" opacity="0.55"/>
<ellipse cx="1055" cy="448" rx="8" ry="8" fill="#c8e030" stroke="#8a8a20" stroke-width="1"/>
<path d="M1083 439 l9 4.05 v9 l-9 4.5 l-9 -4.5 v-9 z M1074 443.05 l9 4.5 l9 -4.5 M1083 447.55 v9" stroke="#28b8a0"/>
<path d="M1108 439 l9 4.05 v9 l-9 4.5 l-9 -4.5 v-9 z M1099 443.05 l9 4.5 l9 -4.5 M1108 447.55 v9" stroke="#28b8a0"/>
<path d="M1126 440 l8 5 l8 -5 v12 l-8 4 l-8 -4 z" stroke="#0a7a5a"/>
<path d="M1153 440 h10 l-3 16 h-10 z M1155 444 h5 M1154 450 h5" stroke="#555a70"/>
<path d="M1180 440 h10 l-3 16 h-10 z M1182 444 h5 M1181 450 h5" stroke="#555a70"/>
<path d="M1211 439 l9 4.05 v9 l-9 4.5 l-9 -4.5 v-9 z M1202 443.05 l9 4.5 l9 -4.5 M1211 447.55 v9" stroke="#2a5cc8"/>
<path d="M1238 439 l9 4.05 v9 l-9 4.5 l-9 -4.5 v-9 z M1229 443.05 l9 4.5 l9 -4.5 M1238 447.55 v9" stroke="#c8d0e8"/>
</g>
<g opacity="0.93" shape-rendering="auto">
<g fill="url(#wmg2)">
<path d="M891.200 517.500h2.200v19.500h-2.200z M895 510.800h2.800v24.500h-2.800z M899.200 508.300h2.800v25h-2.800z"/>
<path d="M934 517.500h2.200v19.500h-2.200z M929.600 510.800h2.800v24.500h-2.800z M925.400 508.300h2.800v25h-2.800z"/>
<path d="M891.200 536.600h14q5 0 8.600 2.400q3.600-2.400 8.600-2.400h13.800v2.400h-13.600q-5 0-8.800 2.400q-3.800-2.400-8.800-2.400h-13.800z"/>
<path d="M895 533.600q8 0.600 13 4l-1 1q-5-3-12-3.400z M932.400 533.600q-8 0.600-13 4l1 1q5-3 12-3.400z M899.200 531q6 1.400 10 5l-1.200 0.800q-4-3.400-8.800-4.400z M928.200 531q-6 1.400-10 5l1.200 0.800q4-3.400 8.800-4.400z"/>
</g>
<path d="M914 511.500q-8 1.500-9.500 9q-0.800 5 2.200 8.600q-0.600-6 2.600-9.400q2-2.200 5.200-2.800z" fill="#f2a21c"/>
<path d="M914.500 517q-1.500 10 1.800 19.500q6-2.800 7.400-8.400q0.800-4-1.200-8q0.200 5-2.600 7.600q-1.600 1.400-3 1.600q-2-5.800-2.400-12.300z" fill="url(#wmg2)"/>
<text x="946.600" y="529.200" font-family="Liberation Sans,Noto Sans CJK SC,sans-serif" font-weight="500" font-size="16.800" fill="#f2882a" textLength="82.600" lengthAdjust="spacingAndGlyphs">智造资料网</text>
<text x="947" y="537.600" font-family="Liberation Sans,sans-serif" font-size="4.400" font-weight="bold" fill="#e8861c" textLength="81.600" lengthAdjust="spacingAndGlyphs">INTELLIGENT MANUFACTURING DATA</text>
</g>
<text x="785.2" y="806" font-family="Liberation Sans,sans-serif" font-size="11" fill="#cfd4dc">Y</text>
<polyline points="789.5,857 789.5,817" fill="none" stroke="#17b032" stroke-width="2.6"/>
<polygon points="789.5,809.2 793.8,818.8 785.4,818.8" fill="#22c83c"/>
<polyline points="788,858.2 764,858" fill="none" stroke="#c0202c" stroke-width="2.4"/>
<polygon points="754,858 765.5,854.4 765.5,861.8" fill="#d02834"/>
<polyline points="743,853.4 751,862.2" fill="none" stroke="#e01818" stroke-width="1.2"/>
<polyline points="751,853.4 743,862.2" fill="none" stroke="#e01818" stroke-width="1.2"/>
<rect x="779.2" y="848.4" width="19.4" height="20.2" fill="#8a9ab8" stroke="#dfe3ea" stroke-width="1" fill-opacity="0.35" stroke-dasharray="4 3"/>
<polyline points="790,858 800,854" fill="none" stroke="#12a0a8" stroke-width="2"/>
<polygon points="798,851 805,852 801,858" fill="#18c8d8"/>
<ellipse cx="788.8" cy="858.4" rx="4" ry="4" fill="url(#sph)"/>
<text x="800.4" y="859.4" font-family="Liberation Sans,sans-serif" font-weight="bold" font-size="12" fill="#f01414">Z</text>
<rect x="95.4" y="915.2" width="24" height="25" fill="#7a8b5e"/>
<polyline points="95.4,940 95.4,915.2 104.5,915.2 105,916.4 119.3,916.4" fill="none" stroke="#ffee00" stroke-width="1.2"/>
<polyline points="119.6,915.2 125.8,915.2 125.8,938.6" fill="none" stroke="#d8d8d8" stroke-width="0.9"/>
<text x="116.4" y="890.4" font-family="Liberation Sans,sans-serif" font-size="11.5" fill="#d8dce4">Y</text>
<polyline points="120.6,939 120.6,900" fill="none" stroke="#10d818" stroke-width="3"/>
<polygon points="120.8,892.3 125,902 116.6,902" fill="#18e020"/>
<polyline points="118,941.2 94,941.2" fill="none" stroke="#f00808" stroke-width="2.8"/>
<polygon points="85.8,941 95.8,937.2 95.8,945" fill="#f00808"/>
<polyline points="74,936.2 82.2,945" fill="none" stroke="#f01010" stroke-width="1.1"/>
<polyline points="82.2,936.2 74,945" fill="none" stroke="#f01010" stroke-width="1.1"/>
<polyline points="121,941.4 131,939.8" fill="none" stroke="#0a7f86" stroke-width="2.2"/>
<ellipse cx="133" cy="939.2" rx="3.4" ry="3.6" fill="none" stroke="#10e8f0" stroke-width="2.2"/>
<polyline points="131,934.6 137.6,934.6" fill="none" stroke="#f01010" stroke-width="1"/>
<polyline points="135,942.6 137.6,942.6" fill="none" stroke="#f01010" stroke-width="1"/>
<ellipse cx="119.9" cy="941.7" rx="3.9" ry="3.9" fill="url(#sph)"/>
</svg>
</div>
<div id="status"><div id="statusin"><div class="abs" style="left:0;top:1px;width:1920px;height:1px;background:#e4e8f4"></div>
<div class="abs" style="left:0;top:19.5px;width:1917px;height:1px;background:#a9adb8"></div>
<div class="abs" style="left:1336px;top:3px;width:3px;height:16px;border-left:2px dotted #b4b8c4"></div>
<div class="abs" style="left:1340.5px;top:3px;width:131px;height:16px;background:#fff"></div>
<div class="abs" style="left:1463px;top:5px;width:9px;height:9px;border:1.4px solid #5c8cd0;border-radius:50%"></div>
<div class="abs" style="left:1475px;top:3px;width:3px;height:16px;border-left:2px dotted #b4b8c4"></div>
<div class="abs" style="left:1487px;top:3px;height:16px;line-height:16px;font-size:12px;white-space:nowrap;letter-spacing:0.2px">绝对 XY 上视图</div>
<div class="abs" style="left:1592px;top:4px;width:1px;height:13px;background:#9aa0ae"></div>
<div class="abs" style="left:1601px;top:3px;height:16px;line-height:16px;font-size:12px;white-space:nowrap">绝对视图</div>
<div class="abs" style="left:1657px;top:3px;width:3px;height:16px;border-left:2px dotted #b4b8c4"></div>
<div class="abs" style="left:1668.5px;top:3px;height:16px;line-height:16px;font-size:12.4px;font-weight:bold;white-space:nowrap;letter-spacing:-0.2px">LAYER0</div>
<div class="abs" style="left:1726px;top:4px;width:1px;height:13px;background:#9aa0ae"></div>
<div class="abs" style="left:1757px;top:4px;width:1px;height:13px;background:#9aa0ae"></div>
<div class="abs" style="left:1800px;top:4px;width:1px;height:13px;background:#9aa0ae"></div>
<div class="abs" style="left:1843px;top:4px;width:1px;height:13px;background:#9aa0ae"></div>
<div class="abs" style="left:1886px;top:4px;width:1px;height:13px;background:#9aa0ae"></div>
<div class="abs" style="left:1762px;top:5px;width:32px;height:12px;background:#47628c"></div>
<div class="abs" style="left:1805px;top:5px;width:32px;height:12px;background:#47628c"></div>
<div class="abs" style="left:1848px;top:5px;width:32px;height:12px;background:#47628c"></div>
<div class="abs" style="left:1132px;top:23px;width:1px;height:15px;background:#9aa0ae"></div>
<div class="abs" style="left:1175px;top:23px;width:1px;height:15px;background:#9aa0ae"></div>
<div class="abs" style="left:1206px;top:23px;width:1px;height:15px;background:#9aa0ae"></div>
<div class="abs" style="left:1237px;top:23px;width:1px;height:15px;background:#9aa0ae"></div>
<div class="abs" style="left:1268px;top:23px;width:1px;height:15px;background:#9aa0ae"></div>
<div class="abs" style="left:1299px;top:23px;width:1px;height:15px;background:#9aa0ae"></div>
<div class="abs" style="left:1330px;top:23px;width:1px;height:15px;background:#9aa0ae"></div>
<div class="abs" style="left:1361px;top:23px;width:1px;height:15px;background:#9aa0ae"></div>
<div class="abs" style="left:1392px;top:23px;width:1px;height:15px;background:#9aa0ae"></div>
<div class="abs" style="left:1423px;top:23px;width:1px;height:15px;background:#9aa0ae"></div>
<div class="abs" style="left:1454px;top:23px;width:1px;height:15px;background:#9aa0ae"></div>
<div class="abs" style="left:1580px;top:23px;width:1px;height:15px;background:#9aa0ae"></div>
<div class="abs" style="left:1654px;top:23px;width:1px;height:15px;background:#9aa0ae"></div>
<div class="abs" style="left:1141px;top:23px;height:16px;line-height:16px;font-size:12px;white-space:nowrap">拴牢</div>
<div class="abs" style="left:1463px;top:24px;height:16px;line-height:16px;font-size:13.3px;white-space:nowrap">ES: 1.00 PS: 1.00</div>
<div class="abs" style="left:1589.5px;top:23px;height:16px;line-height:16px;font-size:12px;white-space:nowrap;letter-spacing:0.4px">单位: 毫米</div>
<div class="abs" style="left:1663px;top:23.2px;height:16px;line-height:16px;font-size:12.9px;white-space:nowrap;color:#f01010" id="cx">X =-2399.479</div>
<div class="abs" style="left:1745px;top:23.2px;height:16px;line-height:16px;font-size:12.85px;white-space:nowrap" id="cy">Y = 2015.644 Z = 0000.000</div>
</div></div>
<div id="taskbar"><div class="abs" style="left:48px;top:0;width:343px;height:8px;background:#f0f0f0"></div><div class="abs" style="left:638px;top:0;width:48px;height:8px;background:#4a4a4c"></div><div class="abs" style="left:1915px;top:0;width:1px;height:8px;background:#8a8a8a"></div><div class="abs" style="left:1815px;top:4px;font-size:12px;line-height:14px;color:#fff;white-space:nowrap">15:58</div></div>
<svg id="icons" width="1920" height="1048" viewBox="0 0 1920 1048" style="position:absolute;left:0;top:0;pointer-events:none">
<defs>
<linearGradient id="iBlueCyl" x1="0" x2="1"><stop offset="0" stop-color="#9cc0f4"/><stop offset="0.45" stop-color="#5f86d4"/><stop offset="1" stop-color="#2a3f94"/></linearGradient>
<linearGradient id="iBlueTop" x1="0" x2="1"><stop offset="0" stop-color="#7aa0e0"/><stop offset="1" stop-color="#34509c"/></linearGradient>
<linearGradient id="iPaleCyl" x1="0" x2="1"><stop offset="0" stop-color="#dbe2f6"/><stop offset="1" stop-color="#b9c2e2"/></linearGradient>
<linearGradient id="iDoc" x1="0" y1="0" x2="1" y2="1"><stop offset="0" stop-color="#ffffff"/><stop offset="1" stop-color="#a8c4f4"/></linearGradient>
<linearGradient id="iFold" x1="0" y1="0" x2="0" y2="1"><stop offset="0" stop-color="#fde9a4"/><stop offset="1" stop-color="#eec052"/></linearGradient>
<linearGradient id="iGreenA" x1="0" y1="0" x2="0" y2="1"><stop offset="0" stop-color="#62c848"/><stop offset="1" stop-color="#1f8a1c"/></linearGradient>
<linearGradient id="iYelA" x1="0" y1="0" x2="0" y2="1"><stop offset="0" stop-color="#f6ee3a"/><stop offset="1" stop-color="#b8a80c"/></linearGradient>
<linearGradient id="iBlueA" x1="0" y1="0" x2="0" y2="1"><stop offset="0" stop-color="#9cc4f0"/><stop offset="1" stop-color="#3c74c0"/></linearGradient>
<linearGradient id="iGreyA" x1="0" y1="0" x2="0" y2="1"><stop offset="0" stop-color="#d2d2d2"/><stop offset="1" stop-color="#8a8a8a"/></linearGradient>
<linearGradient id="iFloppy" x1="0" y1="0" x2="0" y2="1"><stop offset="0" stop-color="#6a8ccc"/><stop offset="1" stop-color="#3c5a9c"/></linearGradient>
<radialGradient id="iLens" cx="0.4" cy="0.35" r="0.7"><stop offset="0" stop-color="#ffffff"/><stop offset="0.6" stop-color="#c4dcf4"/><stop offset="1" stop-color="#7aa8dc"/></radialGradient>
<radialGradient id="iSmile" cx="0.4" cy="0.3" r="0.8"><stop offset="0" stop-color="#fff8a0"/><stop offset="0.6" stop-color="#f8d838"/><stop offset="1" stop-color="#d89c10"/></radialGradient>
<radialGradient id="iBall" cx="0.35" cy="0.3" r="0.8"><stop offset="0" stop-color="#ffffff"/><stop offset="1" stop-color="#5a5a40"/></radialGradient>
<linearGradient id="iCubeTop" x1="0" y1="0" x2="1" y2="1"><stop offset="0" stop-color="#8cc4f8"/><stop offset="1" stop-color="#3c6cc4"/></linearGradient>
<linearGradient id="iSq" x1="0" y1="0" x2="1" y2="1"><stop offset="0" stop-color="#ffffff"/><stop offset="1" stop-color="#a4c0f0"/></linearGradient>
<g id="eye"><path d="M0.4 6.6 Q6 -1.4 13 0.6 Q17.6 2 19.6 5.4 Q13 8.6 6 7.4 Q2.6 7 0.4 6.6 Z" fill="#dfe3f8"/><circle cx="10" cy="4.2" r="3.6" fill="#5c7cb8"/><circle cx="10" cy="4.2" r="1.5" fill="#1a2a4c"/><circle cx="8.8" cy="3" r="0.8" fill="#e8f0ff"/><path d="M0.4 6.6 Q6 -1.6 13 0.2 Q17.8 1.6 19.8 5.2" fill="none" stroke="#2c3452" stroke-width="1.5"/><path d="M0.6 6.8 Q5 8 9 7.8" fill="none" stroke="#a07888" stroke-width="0.6"/><path d="M14.5 0.2l1-1.4M16.4 1.2l1.4-1.2M18 2.6l1.6-0.8M12 -0.4l0.4-1.4" stroke="#2c3452" stroke-width="0.7"/></g>
<g id="plusG"><path d="M3.2 0h2.6v3.2h3.2v2.6h-3.2v3.2h-2.6v-3.2h-3.2v-2.6h3.2z" fill="#86f04c" stroke="#5ab830" stroke-width="0.3"/></g>
<g id="minusY"><path d="M0 0h9v2.4h-9z" fill="#f4f000"/><path d="M0.6 2.4h9v0.8h-9z" fill="#a8a400"/></g>
<g id="undoB" fill="none" stroke="#3c84e8" stroke-width="1.7" stroke-linecap="round"><path d="M0.6 2.6 L5.6 7.8"/><path d="M5.4 1.4 Q10 -0.2 10 4 Q10 6.6 7.6 7"/></g>
<g id="lights"><rect x="0" y="0" width="5.6" height="12" rx="2.6" fill="#0a0a0a"/><circle cx="2.8" cy="3.1" r="2.1" fill="#f4b400"/><circle cx="2.2" cy="2.4" r="0.7" fill="#ffe890"/><circle cx="2.8" cy="8.6" r="2.1" fill="#08d418"/><circle cx="2.2" cy="7.9" r="0.7" fill="#a0ffa0"/><rect x="12" y="0" width="5.6" height="12" rx="2.6" fill="#0a0a0a"/><circle cx="14.8" cy="3.1" r="2.1" fill="#f01010"/><circle cx="14.2" cy="2.4" r="0.7" fill="#ffa0a0"/><circle cx="14.8" cy="8.6" r="2.1" fill="#f4b400"/><circle cx="14.2" cy="7.9" r="0.7" fill="#ffe890"/></g>
<g id="recyc"><path d="M1.6 6 Q2.4 0.8 8.4 0.8 Q12 0.8 13.6 3 L15.4 1 L15.6 7.4 L9.6 6.6 L11.6 4.8 Q10.4 3.6 8.2 3.6 Q5 3.6 4.4 6.4 Z" fill="url(#iGreenA)" stroke="#1c7a18" stroke-width="0.4"/><path d="M15 7.6 Q14.4 12.6 8.4 12.6 Q5 12.6 3.2 10.6 L1.4 12.4 L1 6.2 L7 7 L5.2 8.8 Q6.4 10 8.6 10 Q11.6 10 12.2 7.2 Z" fill="url(#iYelA)" stroke="#988808" stroke-width="0.4"/></g>
<g id="pmslash"><use href="#plusG" transform="scale(0.85)"/><path d="M6.4 12 L13 3.6" stroke="#111" stroke-width="1.2"/><use href="#minusY" x="11" y="8.6" transform="scale(1)"/></g>
<g id="cylW" fill="none" stroke="#161616" stroke-width="1.05"><ellipse cx="5.4" cy="3" rx="5" ry="2.4"/><ellipse cx="5.4" cy="14.6" rx="5" ry="2.4"/><path d="M0.4 3v11.6M10.4 3v11.6"/></g>
<g id="cylW2" fill="none" stroke="#161616" stroke-width="1.05"><ellipse cx="5.4" cy="3" rx="5" ry="2.4"/><path d="M0.4 3v11.6a5 2.4 0 0 0 10 0V3"/></g>
<g id="cylB"><path d="M0.4 3v11.6a5 2.4 0 0 0 10 0V3z" fill="url(#iBlueCyl)" stroke="#0c1430" stroke-width="0.9"/><ellipse cx="5.4" cy="3" rx="5" ry="2.4" fill="url(#iBlueTop)" stroke="#0c1430" stroke-width="0.9"/></g>
<g id="cylC"><path d="M0.4 3v11.6a5 2.4 0 0 0 10 0V3z" fill="url(#iBlueCyl)" stroke="#18e4f0" stroke-width="1"/><ellipse cx="5.4" cy="3" rx="5" ry="2.4" fill="url(#iBlueTop)" stroke="#18e4f0" stroke-width="1"/></g>
<g id="cylP"><path d="M0.4 3v11.6a5 2.4 0 0 0 10 0V3z" fill="url(#iPaleCyl)" stroke="#18e4f0" stroke-width="1"/><ellipse cx="5.4" cy="3" rx="5" ry="2.4" fill="#cfd6f0" stroke="#18e4f0" stroke-width="1"/><path d="M0.4 14a5 2.4 0 0 1 10 0" fill="none" stroke="#18e4f0" stroke-width="0.7"/></g>
<g id="cylPD"><path d="M0.4 3v11.6a5 2.4 0 0 0 10 0V3z" fill="url(#iPaleCyl)" stroke="#1c2030" stroke-width="0.9"/><ellipse cx="5.4" cy="3" rx="5" ry="2.4" fill="#cfdcf4" stroke="#1c2030" stroke-width="0.9"/><path d="M0.4 14a5 2.4 0 0 1 10 0" fill="none" stroke="#8088a0" stroke-width="0.6"/></g>
<g id="cylM" fill="none" stroke="#222" stroke-width="0.8"><ellipse cx="5.4" cy="3" rx="5" ry="2.4"/><path d="M0.4 3v11.6a5 2.4 0 0 0 10 0V3"/><path d="M2.4 5l1.4 5-1.2 6M5 5.4l1.6 5.2-2 6M7.4 5l-1 5 2 6.4M9 5l-1.2 6" stroke="#444" stroke-width="0.7"/></g>
<g id="cubes"><path d="M0.6 3.4 L5.4 1 L11 2.6 L11 8.8 L6.4 11.4 L0.6 9.4Z" fill="#9a9c98" stroke="#222" stroke-width="0.7"/><path d="M0.6 3.4 L5.4 1 L11 2.6 L6.4 5.2Z" fill="#e4e4e0" stroke="#222" stroke-width="0.6"/><path d="M6.4 5.2V11.4" stroke="#222" stroke-width="0.6"/><path d="M6.4 5.2L11 2.6V8.8L6.4 11.4Z" fill="#6c6e6c"/><path d="M9.6 3.2 L14 1 L19.4 2.4 L19.4 8.6 L15 11.4 L9.6 9.6Z" fill="#f4f4f4" fill-opacity="0.9" stroke="#222" stroke-width="0.7"/><path d="M9.6 3.2L15 5.2L19.4 2.4M15 5.2V11.4" fill="none" stroke="#222" stroke-width="0.7"/></g>
<g id="refreshB"><path d="M1 7.4 Q1.4 1.6 8 1.4 Q11 1.4 12.8 3 L14.6 0.8 L15.4 8 L8.6 7.2 L10.6 5.2 Q9.6 4.4 8 4.4 Q4.6 4.6 4.2 7.8Z" fill="url(#iBlueA)" stroke="#3468b0" stroke-width="0.4"/><path d="M15.8 9.6 Q15.4 15.4 8.8 15.6 Q5.8 15.6 4 14 L2.2 16.2 L1.4 9 L8.2 9.8 L6.2 11.8 Q7.2 12.6 8.8 12.6 Q12.2 12.4 12.6 9.2Z" fill="url(#iBlueA)" stroke="#3468b0" stroke-width="0.4"/></g>
<g id="gcorner"><path d="M0 0l3.4 0.6-1 1 2 2-0.8 0.8-2-2-1 1z" fill="#3cc828" stroke="#1c8a14" stroke-width="0.3"/></g>
<g id="mag"><path d="M1 16.4 L7.4 10.2 L8.8 11.6 L2.6 17.8 Z" fill="#d4d4d4" stroke="#8a8a8a" stroke-width="0.5"/><circle cx="11.6" cy="6.6" r="5.4" fill="url(#iLens)" stroke="#6c9cd8" stroke-width="1.3"/><circle cx="11.6" cy="6.6" r="6.2" fill="none" stroke="#c8d4e4" stroke-width="0.6"/></g>
<g id="gcube"><path d="M0 3.4L4.6 1L9 2.6V9L4.6 11.6L0 9.8Z" fill="#6c6e6c" stroke="#333" stroke-width="0.5"/><path d="M0 3.4L4.6 1L9 2.6L4.4 5.2Z" fill="#b8bab8"/><path d="M4.4 5.2V11.6L9 9V2.6Z" fill="#4a4c4a"/></g>
<g id="wpAxes"><path d="M1 10 L10 4.6 L19 8.4 L10 14.6Z" fill="#e8ecf8" stroke="#9aa0b0" stroke-width="0.5"/><path d="M5.4 10.8V2.4" stroke="#1c6cf0" stroke-width="1.6"/><path d="M5.4 0l2.2 3.4h-4.4z" fill="#1c6cf0"/><path d="M5.4 10.8L12.6 5.6" stroke="#2cb82c" stroke-width="1.5"/><path d="M14.6 4.2l-1 3.2-2.4-2.8z" fill="#2cb82c"/><path d="M5.4 10.8L12 15" stroke="#e01818" stroke-width="1.5"/><path d="M14 16.4l-3.6-0.4 1.8-2.8z" fill="#e01818"/><circle cx="5.4" cy="10.8" r="1.7" fill="url(#iBall)" stroke="#444" stroke-width="0.4"/></g>
<linearGradient id="vg" x1="0" y1="0" x2="1" y2="1"><stop offset="0" stop-color="#68e038"/><stop offset="1" stop-color="#18a008"/></linearGradient></defs>
<g transform="translate(22,68)"><path d="M2 3.4h10l3 2.2h-10z" fill="#8890f8" stroke="#6870e0" stroke-width="0.4"/><path d="M2 6.2h10l3 2.2h-10z" fill="#f0f0f0" stroke="#909090" stroke-width="0.4"/><path d="M2 9h10l3 2.2h-10z" fill="#e8e8e8" stroke="#909090" stroke-width="0.4"/><ellipse cx="12" cy="15" rx="7.4" ry="4.6" fill="#c89484" stroke="#8a5c4c" stroke-width="0.5"/><circle cx="15.6" cy="12.6" r="1.8" fill="#e01818"/><circle cx="14.8" cy="16.2" r="1.8" fill="#10b820"/><circle cx="10.2" cy="16.6" r="1.8" fill="#1048f0"/><path d="M20 2l1 0.8-7.4 10-1.6-1z" fill="#b86420" stroke="#7a3c10" stroke-width="0.3"/><path d="M12 11.8l1.6 1-2.6 3z" fill="#d8d8d8"/></g>
<g transform="translate(47,68)"><path d="M8 1.4h7.6l3 3v12h-10.6z" fill="url(#iDoc)" stroke="#111" stroke-width="1"/><path d="M15.6 1.4v3h3" fill="#fff" stroke="#111" stroke-width="0.6"/><path d="M3.6 6h7l3 3v9h-10z" fill="url(#iDoc)" stroke="#111" stroke-width="1"/><path d="M10.6 6v3h3" fill="#fff" stroke="#111" stroke-width="0.6"/><use href="#eye" x="1" y="11.6"/></g>
<g transform="translate(73,68)"><use href="#eye" x="1.4" y="2"/><use href="#plusG" x="1" y="10.6"/><use href="#undoB" x="11" y="12"/></g>
<g transform="translate(99,68)"><use href="#eye" x="1.4" y="2"/><use href="#minusY" x="0.6" y="14.6"/><use href="#undoB" x="10.6" y="12"/></g>
<g transform="translate(125,68)"><use href="#eye" x="1.4" y="2"/><use href="#lights" x="2" y="8"/></g>
<g transform="translate(151,68)"><use href="#eye" x="1.4" y="2"/><use href="#recyc" x="3.4" y="7.4"/></g>
<g transform="translate(177,68)"><use href="#eye" x="1.4" y="2"/><use href="#pmslash" x="0.6" y="8.2"/></g>
<g transform="translate(203,68)"><use href="#eye" x="1.4" y="2"/><use href="#plusG" x="8.6" y="8.8" transform="translate(-2.2,-2.4) scale(1.25)"/></g>
<g transform="translate(229,68)"><use href="#eye" x="1.4" y="2"/><use href="#minusY" x="8" y="11.6" transform="translate(-1,0) scale(1.15)"/></g>
<g transform="translate(272,68)"><use href="#refreshB" x="2.6" y="2.2"/></g>
<g transform="translate(299.4,68)"><use href="#cylW" x="5.6" y="1.4"/></g>
<g transform="translate(325.4,68)"><use href="#cylW2" x="5.6" y="1.4"/></g>
<g transform="translate(351.5,68)"><use href="#cylW" x="5.6" y="1.4"/><path d="M6 15.4a5 2.4 0 0 1 10 0" fill="none" stroke="#222" stroke-width="0.7"/></g>
<g transform="translate(377.5,68)"><ellipse cx="14" cy="18.6" rx="6" ry="1.4" fill="#000" opacity="0.25"/><use href="#cylC" x="5.6" y="1.4"/></g>
<rect x="401.5" y="66.5" width="23" height="23" fill="#ffe474" stroke="#e4c060" stroke-width="1"/>
<g transform="translate(403.5,68)"><ellipse cx="14" cy="18.6" rx="6" ry="1.4" fill="#000" opacity="0.3"/><use href="#cylB" x="5.6" y="1.4"/></g>
<g transform="translate(429.4,68)"><ellipse cx="14" cy="18.8" rx="6" ry="1.3" fill="#000" opacity="0.2"/><use href="#cylP" x="5.6" y="1.4"/></g>
<g transform="translate(455.4,68)"><ellipse cx="14" cy="18.8" rx="6" ry="1.3" fill="#000" opacity="0.2"/><use href="#cylPD" x="5.6" y="1.4"/></g>
<g transform="translate(481.5,68)"><use href="#cylM" x="5.6" y="1.4"/></g>
<g transform="translate(506,68)"><path d="M10.6 1.2 q5-2 7.4 1.6l-2.6 0.6z M13 4l4-1-0.6 3.6z" fill="#28c428"/><path d="M3 18.6q4.4 2 8-1l-3-0.2zM3.4 19l0.2-4 3 2.4z" fill="#28c428"/><g transform="scale(0.82) translate(1.6,0.6)"><use href="#cylW2" x="0" y="0"/><path d="M0.4 11.6a5 2.4 0 0 0 10 0" fill="none" stroke="#222" stroke-width="0.9"/></g><g transform="translate(11,5.4) scale(0.86)"><use href="#cylB" x="0" y="0"/></g></g>
<g transform="translate(533.5,68)"><use href="#cylB" x="1.6" y="1.4"/><g transform="translate(7.4,6) scale(0.72)"><use href="#refreshB" x="0" y="0"/></g></g>
<g transform="translate(558.7,68)"><path d="M1.6 3h16.8l1.4 11h-19.6z" fill="#2c4c8c" stroke="#9aa0a8" stroke-width="1"/><path d="M6 16h9v1.6h-9z" fill="#b0b0b0"/><path d="M3.6 17.6L14.6 5.4" stroke="#4c84d0" stroke-width="2.6" stroke-linecap="round"/><path d="M14.6 5.4l3.4-3" stroke="#c8d8e8" stroke-width="1.4"/><path d="M6 5.2L17.4 16.4" stroke="#e4e4e4" stroke-width="2.2" stroke-linecap="round"/><path d="M4.4 2.6a3 3 0 1 0 4 3.6" fill="none" stroke="#e8e8e8" stroke-width="1.8"/></g>
<g transform="translate(601.5,68)"><use href="#cubes" x="1" y="1"/><use href="#plusG" x="0.8" y="10.6"/><use href="#undoB" x="10.8" y="12"/></g>
<g transform="translate(627.6,68)"><use href="#cubes" x="1" y="1"/><use href="#lights" x="2.4" y="8"/></g>
<g transform="translate(653.6,68)"><use href="#cubes" x="1" y="1"/><use href="#recyc" x="3.4" y="7.6"/></g>
<g transform="translate(679.5,68)"><use href="#cubes" x="1" y="1"/><use href="#pmslash" x="0.6" y="8.2"/></g>
<g transform="translate(706.6,68)"><ellipse cx="14" cy="18.6" rx="6" ry="1.4" fill="#000" opacity="0.3"/><use href="#cylB" x="5.6" y="1.4"/><path d="M11 6.6v11" stroke="#0a0a1c" stroke-width="1.1" stroke-dasharray="2 1.4"/></g>
<g transform="translate(732.5,68)"><ellipse cx="14" cy="18.6" rx="6" ry="1.4" fill="#000" opacity="0.3"/><use href="#cylB" x="5.6" y="1.4"/><path d="M7.2 7h1.8v11h-1.8zM12.4 7.4h1.8v11h-1.8z" fill="#f4f4f4"/><path d="M9.8 7.4h1.6v11.4h-1.6zM14.4 7h1.2v10.6h-1.2z" fill="#f4ec30"/></g>
<g transform="translate(759,68)"><ellipse cx="14" cy="18.8" rx="6" ry="1.3" fill="#000" opacity="0.25"/><use href="#cylP" x="5.6" y="1.4"/><path d="M7.4 10.4l2.4-1.4 2 4.4q2.6-5.6 6.6-8.6l0.8 1.4q-4 4.6-6.6 11.2l-2.2 0.2z" fill="#5cd428" stroke="#3ca018" stroke-width="0.4"/></g>
<g transform="translate(784,68)"><ellipse cx="6" cy="17.4" rx="5" ry="1.6" fill="#000" opacity="0.45"/><g transform="translate(1.4,0)"><use href="#cylP" x="5.6" y="1.4"/></g><rect x="13" y="0.8" width="5.6" height="5.6" fill="#f4f0e0" stroke="#c8980c" stroke-width="1.2"/><circle cx="15.4" cy="4" r="1.5" fill="none" stroke="#e83010" stroke-width="0.9"/></g>
<g transform="translate(810.5,68)"><g stroke="#4c9ce8" fill="none" stroke-width="0.8"><ellipse cx="11" cy="4.4" rx="5.4" ry="2.4"/><path d="M5.6 4.4v11.6a5.4 2.4 0 0 0 10.8 0V4.4"/><path d="M7.6 6.4l1.4 5-1.2 6M10.2 6.8l1.6 5.2-2 6M12.6 6.4l-1 5 2 6.4M14.4 6.4l-1.2 6"/></g></g>
<g transform="translate(836,68)"><path d="M2 4.6L11 1.4L20 4.6L11 8.6Z" fill="url(#iCubeTop)" stroke="#0c1424" stroke-width="0.9"/><path d="M2 4.6L11 8.6V18.4Z" fill="#5c8cdc" stroke="#0c1424" stroke-width="0.9"/><path d="M20 4.6L11 8.6V18.4Z" fill="#2844a0" stroke="#0c1424" stroke-width="0.9"/></g>
<g transform="translate(878,68)"><path d="M1 4h4M3 2v4M1 7.6h4" stroke="#111" stroke-width="0.9"/><g transform="translate(0.4,1.6)"><use href="#mag" x="0" y="0"/></g><path d="M9.6 5.2l5.4 3-5.4 3z" fill="#b4c8dc" stroke="#7c9cc0" stroke-width="0.4"/><g transform="translate(11.6,8.4)"><use href="#gcube" x="0" y="0"/></g></g>
<g transform="translate(904,68)"><g transform="translate(0.4,1.6)"><use href="#mag" x="0" y="0"/></g><path d="M9.6 5.2l5.4 3-5.4 3z" fill="#b4c8dc" stroke="#7c9cc0" stroke-width="0.4"/><g transform="translate(11.6,8.4)"><use href="#gcube" x="0" y="0"/></g><use href="#gcorner" x="1" y="1.6"/><g transform="translate(20.4,1.6) scale(-1,1)"><use href="#gcorner" x="0" y="0"/></g><g transform="translate(1,19.6) scale(1,-1)"><use href="#gcorner" x="0" y="0"/></g><g transform="translate(20.4,19.6) scale(-1,-1)"><use href="#gcorner" x="0" y="0"/></g></g>
<g transform="translate(930,68)"><rect x="4" y="5" width="13.4" height="10" fill="url(#iSq)" stroke="#333" stroke-width="0.9"/><text x="10.8" y="13.4" text-anchor="middle" font-family="Liberation Sans,sans-serif" font-weight="bold" font-size="8.6" fill="#2a1c8c" textLength="11.4" lengthAdjust="spacingAndGlyphs">1:1</text><use href="#gcorner" x="1.2" y="1.8"/><g transform="translate(20.4,1.8) scale(-1,1)"><use href="#gcorner" x="0" y="0"/></g><g transform="translate(1.2,18.6) scale(1,-1)"><use href="#gcorner" x="0" y="0"/></g><g transform="translate(20.4,18.6) scale(-1,-1)"><use href="#gcorner" x="0" y="0"/></g></g>
<g transform="translate(956,68)"><path d="M5 15.6L17 4" stroke="#2cb82c" stroke-width="1.8"/><path d="M19.6 1.6l-1.6 6.4-4.6-4.8z" fill="#2cb82c" stroke="#1c8a1c" stroke-width="0.4"/><path d="M9 6l4-3" stroke="#e4e8f0" stroke-width="1.6" opacity="0.8"/><circle cx="4.8" cy="15.6" r="2.7" fill="url(#iBall)" stroke="#3c3c28" stroke-width="0.5"/></g>
<g transform="translate(982,68)"><path d="M3 12 Q2 4 9 2.6 L8.6 0.6 L14.6 3.6 L9.8 7.6 L9.6 5.4 Q5.6 6.6 6.2 11.4Z" fill="#38b430" stroke="#1c8018" stroke-width="0.5"/><path d="M19 8 Q20 16 13 17.4 L13.4 19.4 L7.4 16.4 L12.2 12.4 L12.4 14.6 Q16.4 13.4 15.8 8.6Z" fill="#38b430" stroke="#1c8018" stroke-width="0.5"/></g>
<g transform="translate(1008,68)"><use href="#eye" x="1" y="0.8"/><circle cx="11.6" cy="13.4" r="6" fill="url(#iSmile)" stroke="#c89010" stroke-width="0.4"/><ellipse cx="9.6" cy="11.6" rx="0.9" ry="1.4" fill="#2a1c08"/><ellipse cx="13.6" cy="11.6" rx="0.9" ry="1.4" fill="#2a1c08"/><path d="M8 15q3.6 3 7.2 0" fill="none" stroke="#6a4408" stroke-width="0.8"/></g>
<g transform="translate(1051,68)"><use href="#wpAxes" x="1" y="2.4"/></g>
<g transform="translate(1077.8,68)"><g transform="translate(6.4,2) scale(0.66)"><use href="#wpAxes" x="0" y="0"/></g><path d="M2 17L10.6 8.4" stroke="#2ca82c" stroke-width="3"/><path d="M12.6 6.4l-1 5.8-4.8-4.8z" fill="#2ca82c" stroke="#187818" stroke-width="0.4"/><rect x="10.8" y="14.4" width="8" height="4" fill="#d8dce8" stroke="#8a8e98" stroke-width="0.8"/><circle cx="3.4" cy="17.4" r="1.8" fill="#c8c8c8" stroke="#777" stroke-width="0.4"/></g>
<g transform="translate(1103.5,68)"><g transform="translate(6.6,1.6) scale(0.66)"><use href="#wpAxes" x="0" y="0"/></g><path d="M2.6 7.4L9 15.4M4 14l5.4 4" stroke="#2ca82c" stroke-width="2.6"/><path d="M1.6 5.4l4.4 0.6-3.4 3zM10.6 19.6l-4.4-0.6 3.4-3z" fill="#2ca82c"/></g>
<g transform="translate(1146,68)"><rect x="1.6" y="1.4" width="5.8" height="5.6" fill="#00c8f8"/><rect x="8" y="1.4" width="5.8" height="5.6" fill="#f8d800"/><rect x="14.4" y="1.4" width="5.8" height="5.6" fill="#10e010"/><rect x="1.6" y="7.6" width="5.8" height="5.6" fill="#f88000"/><rect x="8" y="7.6" width="5.8" height="5.6" fill="#a06008"/><rect x="14.4" y="7.6" width="5.8" height="5.6" fill="#f010e0"/><rect x="1.6" y="13.8" width="5.8" height="5.6" fill="#0818f0"/><rect x="8" y="13.8" width="5.8" height="5.6" fill="#10a830"/><rect x="14.4" y="13.8" width="5.8" height="5.6" fill="#808080"/></g>
<g transform="translate(1172,68)"><rect x="3.2" y="1" width="15.6" height="18.6" fill="#e8f0fc" stroke="#8090a8" stroke-width="0.9"/><rect x="4.6" y="2.4" width="12.8" height="1.6" fill="#5c9cf0"/><rect x="5" y="5.2" width="5" height="1" fill="#f8b020"/><rect x="12" y="5.2" width="5" height="1" fill="#f8b020"/><rect x="5" y="7" width="12" height="1.2" fill="#90d890"/><rect x="6.2" y="9" width="3" height="2.4" fill="#00c8f8"/><rect x="9.6" y="9" width="3" height="2.4" fill="#f8d800"/><rect x="13" y="9" width="3" height="2.4" fill="#10e010"/><rect x="6.2" y="11.8" width="3" height="2.4" fill="#f88000"/><rect x="9.6" y="11.8" width="3" height="2.4" fill="#a06008"/><rect x="13" y="11.8" width="3" height="2.4" fill="#f010e0"/><rect x="6.2" y="14.6" width="3" height="2.4" fill="#0818f0"/><rect x="9.6" y="14.6" width="3" height="2.4" fill="#10a830"/><rect x="13" y="14.6" width="3" height="2.4" fill="#808080"/></g>
<g transform="translate(1198.5,68)"><circle cx="11" cy="10.4" r="9.6" fill="#5c9838" stroke="#7c7c7c" stroke-width="1.4"/><path d="M6 16.4L15 6" stroke="#4c84d0" stroke-width="2.6" stroke-linecap="round"/><path d="M15 6l2.4-2.6" stroke="#d8e4f0" stroke-width="1.4"/><path d="M8 6L16 15.6" stroke="#e8e8e8" stroke-width="2.4" stroke-linecap="round"/><path d="M5.4 4.4a3 3 0 1 0 4.2 3" fill="none" stroke="#ececec" stroke-width="1.8"/><path d="M9.6 13.4l2.8 0 1 4.4h-4.8z" fill="#b8b8b0"/></g>
<g transform="translate(1224,68)"><rect x="1.6" y="1" width="19" height="18.4" fill="#d4e4f8" stroke="#5c6c88" stroke-width="0.9"/><rect x="1.6" y="1" width="19" height="2.6" fill="#3c6cc0"/><rect x="6" y="5.4" width="1.8" height="2" fill="#a8b020"/><rect x="8.6" y="5.4" width="1.8" height="2" fill="#a8b020"/><rect x="11.2" y="5.4" width="1.8" height="2" fill="#a8b020"/><rect x="13.8" y="5.4" width="1.8" height="2" fill="#a8b020"/><rect x="16.4" y="5.4" width="1.8" height="2" fill="#a8b020"/><rect x="3.2" y="7.6" width="2" height="1.8" fill="#b05010"/><rect x="3.2" y="10.4" width="2" height="1.8" fill="#b05010"/><rect x="3.2" y="13.2" width="2" height="1.8" fill="#b05010"/><rect x="3.2" y="16" width="2" height="1.8" fill="#b05010"/><path d="M8.6 17L17 8.4" stroke="#6c9cdc" stroke-width="2"/><path d="M9 9l8 8.4" stroke="#b8c8dc" stroke-width="1.8"/></g>
<g transform="translate(1250.5,68)"><path d="M2.6 1l1.1 1.1-1.1 1.1-1.1-1.1z" fill="#1c3c8c"/><path d="M7.4 1l1.1 1.1-1.1 1.1-1.1-1.1z" fill="#1c3c8c"/><path d="M12.2 1l1.1 1.1-1.1 1.1-1.1-1.1z" fill="#1c3c8c"/><path d="M17 1l1.1 1.1-1.1 1.1-1.1-1.1z" fill="#1c3c8c"/><path d="M21 1l1.1 1.1-1.1 1.1-1.1-1.1z" fill="#1c3c8c"/><path d="M2.6 9l1.1 1.1-1.1 1.1-1.1-1.1z" fill="#1c3c8c"/><path d="M2.6 17l1.1 1.1-1.1 1.1-1.1-1.1z" fill="#1c3c8c"/><path d="M8 17l1.1 1.1-1.1 1.1-1.1-1.1z" fill="#1c3c8c"/><path d="M13 17l1.1 1.1-1.1 1.1-1.1-1.1z" fill="#1c3c8c"/><path d="M17 17l1.1 1.1-1.1 1.1-1.1-1.1z" fill="#1c3c8c"/><path d="M21 17l1.1 1.1-1.1 1.1-1.1-1.1z" fill="#1c3c8c"/><path d="M21 9l1.1 1.1-1.1 1.1-1.1-1.1z" fill="#1c3c8c"/><path d="M21 13l1.1 1.1-1.1 1.1-1.1-1.1z" fill="#1c3c8c"/><path d="M6 12.4q2-5 6.4-6.6l5-1.6q3 0 3 3l0.4 4-4 1-3.4 0.6-3 1.6z" fill="#f0b878" stroke="#a8682c" stroke-width="0.5"/><path d="M6 12.4l7-3.4 1.4 1.4-4 3z" fill="#e8a860" stroke="#a8682c" stroke-width="0.4"/><circle cx="5.6" cy="14.4" r="2.8" fill="#f4f030" stroke="#b8b008" stroke-width="0.4"/><path d="M3.4 14.4h4.4M5.6 12.2v4.4" stroke="#1c54d8" stroke-width="1"/></g>
<g transform="translate(1276,68)"><path d="M5.6 3.4L19.6 1L16.4 15.4L1.4 18.4Z" fill="#d84848" stroke="#2c5cc8" stroke-width="1.4"/><g stroke="#f8c8c8" stroke-width="0.7"><path d="M9 2.8L5 17.6M12.6 2.2L8.8 16.8M16 1.6L12.6 16"/><path d="M4.6 7L18.6 4.6M3.6 10.8L17.8 8.4M2.6 14.6L17 12"/></g><path d="M1.4 18.4l15-3 1.6 1-14 3.6z" fill="#2c4c9c"/></g>
<g transform="translate(2,3)"><rect x="0" y="0" width="16" height="16" fill="#6cba3c"/><rect x="0" y="0" width="16" height="16" fill="none" stroke="#8ccc5c" stroke-width="1"/><path d="M4.4 5.6l3.2 7.6h1.6l3.6-9.4h-2.2l-2.2 6.4-1.8-4.6z" fill="#fff"/><circle cx="4.6" cy="3.8" r="1.1" fill="#fff"/></g>
<path d="M20.5 6v13" stroke="#9a9a9a" stroke-width="1"/>
<g transform="translate(33,4)"><path d="M0.8 0.6h8l4 4v11h-12z" fill="url(#iDoc)" stroke="#111" stroke-width="1.3"/><path d="M8.8 0.6v4h4" fill="#fff" stroke="#111" stroke-width="0.7"/></g>
<g transform="translate(55,4)"><path d="M0.8 5.6l2-1.8h4l1 1.2h5v3h-10z" fill="#f4d478" stroke="#c49c34" stroke-width="0.5"/><path d="M0.8 16l0.4-10 13 0.6-4 7.4z" fill="url(#iFold)" stroke="#c49c34" stroke-width="0.5"/><path d="M1.2 16.4l3.4-7.4h10.8l-4.6 7.2z" fill="#f8dc88" stroke="#c49c34" stroke-width="0.5"/><path d="M5 6.4q0.6-5.4 6.6-4.6l0.4-1.6 5.8 4-5 4.6-0.2-2.4q-3-0.8-4.6 1.6z" fill="url(#iGreenA)" stroke="#187c14" stroke-width="0.4"/></g>
<g transform="translate(79,3)"><rect x="8" y="1.6" width="6" height="15.4" fill="none" stroke="#58c858" stroke-width="0.9"/><path d="M0.6 3.2l3.6-1.8 3.6 1 -0.4 5.2-6.8 1.6z" fill="url(#iFold)" stroke="#c8a440" stroke-width="0.5"/><path d="M0.6 11.2l3.6-1.8 3.6 1-0.4 5.2-6.8 1.6z" fill="url(#iFold)" stroke="#c8a440" stroke-width="0.5"/><path d="M9.6 4.6h5l3 2.6v6.6h-8z" fill="url(#iDoc)" stroke="#222" stroke-width="0.9"/><path d="M9.8 14.4h7.6" stroke="#666" stroke-width="1"/></g>
<g transform="translate(103,4)"><rect x="0" y="0" width="16" height="16" rx="1" fill="url(#iFloppy)" stroke="#2c4478" stroke-width="0.6"/><rect x="2" y="0.8" width="12" height="8" fill="#f4f4f4"/><rect x="2" y="0.8" width="12" height="1.6" fill="#e03c3c"/><path d="M3 4.4h10M3 6.2h10" stroke="#b4b4b4" stroke-width="0.7"/><rect x="3.6" y="10.6" width="8.8" height="5.4" fill="#5c5c5c"/><rect x="5" y="11.4" width="2.6" height="4" fill="#e8e8e8"/></g>
<g transform="translate(132,3.4)"><g transform="scale(0.72)"><rect x="0" y="0" width="16" height="16" rx="1" fill="url(#iFloppy)" stroke="#2c4478" stroke-width="0.6"/><rect x="2" y="0.8" width="12" height="8" fill="#f4f4f4"/><rect x="2" y="0.8" width="12" height="1.6" fill="#e03c3c"/><path d="M3 4.4h10M3 6.2h10" stroke="#b4b4b4" stroke-width="0.7"/><rect x="3.6" y="10.6" width="8.8" height="5.4" fill="#5c5c5c"/><rect x="5" y="11.4" width="2.6" height="4" fill="#e8e8e8"/></g></g>
<g transform="translate(127,9)"><g transform="scale(0.72)"><rect x="0" y="0" width="16" height="16" rx="1" fill="url(#iFloppy)" stroke="#2c4478" stroke-width="0.6"/><rect x="2" y="0.8" width="12" height="8" fill="#f4f4f4"/><rect x="2" y="0.8" width="12" height="1.6" fill="#e03c3c"/><path d="M3 4.4h10M3 6.2h10" stroke="#b4b4b4" stroke-width="0.7"/><rect x="3.6" y="10.6" width="8.8" height="5.4" fill="#5c5c5c"/><rect x="5" y="11.4" width="2.6" height="4" fill="#e8e8e8"/></g></g>
<g transform="translate(149,2)"><g transform="scale(0.66)"><rect x="0" y="0" width="16" height="16" rx="1" fill="url(#iFloppy)" stroke="#2c4478" stroke-width="0.6"/><rect x="2" y="0.8" width="12" height="8" fill="#f4f4f4"/><rect x="2" y="0.8" width="12" height="1.6" fill="#e03c3c"/><path d="M3 4.4h10M3 6.2h10" stroke="#b4b4b4" stroke-width="0.7"/><rect x="3.6" y="10.6" width="8.8" height="5.4" fill="#5c5c5c"/><rect x="5" y="11.4" width="2.6" height="4" fill="#e8e8e8"/></g><path d="M11 4.4q4.4-3 6.6 1.6l-1.6 0.2q-1.6-2.6-4-0.6l1.2 1.6-4 0.2 0.6-4z" fill="#28b828"/><path d="M8.6 12.4l5-2.4 4.8 1.6v5.2l-5 2.8-4.8-2z" fill="#8a8c88" stroke="#444" stroke-width="0.5"/><path d="M8.6 12.4l5-2.4 4.8 1.6-5 2.6z" fill="#c4c6c2"/><path d="M13.4 14.2v5.4l5-2.8v-5.2z" fill="#5c5e5c"/></g>
<g transform="translate(175,3)"><rect x="3.4" y="1" width="10.6" height="8.4" fill="#a8c8f4" stroke="#5c6c8c" stroke-width="0.7"/><path d="M8.6 1.8l3 3.4h-1.8v2h-2.4v-2h-1.8z" fill="#18c818"/><path d="M0.6 9.6q0-1.6 1.6-1.6h13.6q1.6 0 1.6 1.6v5.4h-16.8z" fill="#e4e4e4" stroke="#7c7c7c" stroke-width="0.7"/><rect x="1.6" y="12.6" width="14.8" height="3.6" fill="#f8f8f8" stroke="#8a8a8a" stroke-width="0.5"/><path d="M2.4 11h13" stroke="#9a9a9a" stroke-width="0.8"/></g>
<g transform="translate(198,2)"><circle cx="9.6" cy="9.4" r="9" fill="#5c9c38" stroke="#8c9c84" stroke-width="1"/><path d="M12.6 13l5.4 5" stroke="#c8c8c8" stroke-width="2.4" stroke-linecap="round"/><circle cx="8.8" cy="9" r="5.4" fill="url(#iLens)" stroke="#8cb0dc" stroke-width="1.3"/><path d="M8.8 7v4" stroke="#9ab0cc" stroke-width="0.6"/><path d="M13 4l3-2 0.4 3.4z" fill="#9a9a9a"/></g>
<g transform="translate(224,2.6)"><ellipse cx="9" cy="17" rx="8" ry="1.4" fill="#000" opacity="0.12"/><path d="M0.6 6.4L7.6 0.6V4Q15.4 4.4 14.4 12.6Q13.6 16 10 17.4Q13 13.6 11.6 10.6Q10.4 8.6 7.6 8.8V12.4Z" fill="url(#iGreyA)" stroke="#8c8c8c" stroke-width="0.4"/></g>
<g transform="translate(262.6,2.6)"><ellipse cx="9" cy="17" rx="8" ry="1.4" fill="#000" opacity="0.12" transform="scale(-1,1)"/><g transform="scale(-1,1)"><path d="M0.6 6.4L7.6 0.6V4Q15.4 4.4 14.4 12.6Q13.6 16 10 17.4Q13 13.6 11.6 10.6Q10.4 8.6 7.6 8.8V12.4Z" fill="url(#iGreyA)" stroke="#8c8c8c" stroke-width="0.4"/></g></g>
<g transform="translate(272,2.4)"><ellipse cx="9" cy="17" rx="7" ry="1.3" fill="#000" opacity="0.12"/><path d="M0.6 6.4L7.6 0.6V4Q15.4 4.4 14.4 12.6Q13.6 16 10 17.4Q13 13.6 11.6 10.6Q10.4 8.6 7.6 8.8V12.4Z" fill="url(#iBlueA)" stroke="#3c6cb4" stroke-width="0.4"/></g>
<g transform="translate(270,10.4)"><path d="M0.4 0.4h5.6v1.2l-1.8 3 1.8 3.4v1.2h-5.6v-1.2l1.8-3.4-1.8-3z" fill="#d8c890" stroke="#6c5418" stroke-width="0.8"/><path d="M0 0.4h6.4M0 9.4h6.4" stroke="#8c6c1c" stroke-width="1.1"/></g>
<path d="M294.6 9.5h8" stroke="#111" stroke-width="1.2"/><path d="M295 12h7.2l-3.6 3.6z" fill="#111"/>
<path d="M312.5 6v13" stroke="#9a9a9a" stroke-width="1"/>
<path d="M1799 10.5h10" stroke="#111" stroke-width="1"/>
<path d="M1844.5 7.5h7v7h-7zM1846.5 7.5v-2h7v7h-2" fill="none" stroke="#111" stroke-width="1"/>
<path d="M1890 5.500l10 10M1900 5.5l-10 10" stroke="#111" stroke-width="1.1"/>
<path d="M1870 36.500h9" stroke="#9a9484" stroke-width="1"/>
<path d="M1888.500 30.500h6v6h-6zM1890.500 30.500v-2h6v6h-2" fill="none" stroke="#9a9484" stroke-width="1"/>
<path d="M1906 28.500l9 9M1915 28.500l-9 9" stroke="#9a9484" stroke-width="1"/>
<g transform="translate(7.3,132)"><g opacity="0.55"><path d="M1.6 4h6M1 7.6h6M2 11h5" stroke="#b8c4d8" stroke-width="1.6"/></g><g transform="translate(2.4,1.4)"><use href="#mag" x="0" y="0"/></g></g>
<g transform="translate(33,132)"><path d="M2 2.600l3 3M6.400 1l3 3.400M8.800 9.400l8 9.600M12.400 8.600l7 8" stroke="#2c6ce0" stroke-width="1.3"/><ellipse cx="11" cy="18.800" rx="8" ry="1.400" fill="#000" opacity="0.15"/><g transform="translate(3,-1.400)"><path d="M1 17.6L13.4 2.4l2.4 1.8L3.8 19.4z" fill="#d89838" stroke="#6c4410" stroke-width="0.5"/><path d="M13.4 2.4l1.2-1.4 2.4 1.8-1.2 1.4z" fill="#e03030"/><path d="M1 17.6l2.8 1.8-3.4 1z" fill="#3c2c1c"/><path d="M3 16.6L14.4 3.2" stroke="#f8d488" stroke-width="0.7"/></g><path d="M16.4 -0.6h5.4l-2.7 2.8z" fill="#000"/></g>
<g transform="translate(7.3,158)"><rect x="4.400" y="5" width="13.200" height="10.600" fill="url(#iSq)" stroke="#6c6c6c" stroke-width="1"/><use href="#gcorner" x="0.8" y="1.4" transform="scale(1.15)"/><g transform="translate(21.200,1.600) scale(-1.15,1.15)"><use href="#gcorner" x="0" y="0"/></g><g transform="translate(0.900,19.600) scale(1.15,-1.15)"><use href="#gcorner" x="0" y="0"/></g><g transform="translate(21.200,19.600) scale(-1.15,-1.15)"><use href="#gcorner" x="0" y="0"/></g></g>
<g transform="translate(33,158)"><path d="M9.600 4.400Q6 -0.400 2.600 3.400Q0.400 8 7.400 11.600Q12 14.600 12.600 17.600Q16.400 20.400 19.200 15.400Q20.400 10 14.400 9.400" fill="none" stroke="#2c6ce0" stroke-width="1.500"/><ellipse cx="9" cy="18.400" rx="7" ry="1.300" fill="#000" opacity="0.15"/><g transform="translate(3,-1.400)"><path d="M1 17.6L13.4 2.4l2.4 1.8L3.8 19.4z" fill="#d89838" stroke="#6c4410" stroke-width="0.5"/><path d="M13.4 2.4l1.2-1.4 2.4 1.8-1.2 1.4z" fill="#e03030"/><path d="M1 17.6l2.8 1.8-3.4 1z" fill="#3c2c1c"/><path d="M3 16.6L14.4 3.2" stroke="#f8d488" stroke-width="0.7"/></g><path d="M16.4 -0.6h5.4l-2.7 2.8z" fill="#000"/></g>
<g transform="translate(7.3,184)"><path d="M-1 3.400h4M1 1.400v4M-1 7h4" stroke="#111" stroke-width="0.9"/><g transform="translate(0.400,1.600)"><use href="#mag" x="0" y="0"/></g><path d="M9.400 5.200l5.400 3-5.400 3z" fill="#b4c8dc" stroke="#7c9cc0" stroke-width="0.4"/><g transform="translate(11.400,9.400)"><use href="#gcube" x="0" y="0"/></g><path d="M15.6 -0.6h5.4l-2.7 2.8z" fill="#000"/></g>
<g transform="translate(33,184)"><path d="M2.400 2.600h14v7.400h-2.400v3.400h2.400v5.600h-14z" fill="#eef0d8" stroke="#f4f000" stroke-width="1.500"/><path d="M4.800 9.800l2.600-1.400 2 4q2.600-5.400 6-8l1 1.400q-3.600 4.400-6 10.600l-2.400 0.200z" fill="#54cc28" stroke="#389818" stroke-width="0.4"/><path d="M16.4 -0.6h5.4l-2.7 2.8z" fill="#000"/></g>
<g transform="translate(7.3,210)"><g transform="translate(0.400,2)"><use href="#wpAxes" x="0" y="0"/></g><path d="M15.6 -0.6h5.4l-2.7 2.8z" fill="#000"/></g>
<g transform="translate(33,210)"><path d="M1.600 12Q2 0.600 6 2Q9 3.600 11 12Q13.400 20.400 17 18Q19.600 15 19.400 10" fill="none" stroke="#2c5cd0" stroke-width="1.500"/><ellipse cx="9" cy="18.600" rx="7" ry="1.300" fill="#000" opacity="0.15"/><g transform="translate(3,-1.400)"><path d="M1 17.6L13.4 2.4l2.4 1.8L3.8 19.4z" fill="#d89838" stroke="#6c4410" stroke-width="0.5"/><path d="M13.4 2.4l1.2-1.4 2.4 1.8-1.2 1.4z" fill="#e03030"/><path d="M1 17.6l2.8 1.8-3.4 1z" fill="#3c2c1c"/><path d="M3 16.6L14.4 3.2" stroke="#f8d488" stroke-width="0.7"/></g><path d="M16.4 -0.6h5.4l-2.7 2.8z" fill="#000"/></g>
<g transform="translate(7.3,236)"><path d="M1 2.400h10l3 2.200h-10z" fill="#8890f8" stroke="#6870e0" stroke-width="0.4"/><path d="M1 5.200h10l3 2.200h-10z" fill="#f0f0f0" stroke="#909090" stroke-width="0.4"/><path d="M1 8h10l3 2.200h-10z" fill="#e8e8e8" stroke="#909090" stroke-width="0.4"/><ellipse cx="11" cy="14.400" rx="7.400" ry="4.600" fill="#c89484" stroke="#8a5c4c" stroke-width="0.5"/><circle cx="14.600" cy="12" r="1.800" fill="#e01818"/><circle cx="13.800" cy="15.600" r="1.800" fill="#10b820"/><circle cx="9.200" cy="16" r="1.800" fill="#1048f0"/><path d="M19 1l1 0.800-7.400 10-1.600-1z" fill="#b86420" stroke="#7a3c10" stroke-width="0.3"/><path d="M14.6 -1.6h5.4l-2.7 2.8z" fill="#000"/></g>
<g transform="translate(33,236)"><path d="M6.400 4L19 1.400L16 15.600L1.600 19.400Z" fill="#a8d0f8" stroke="#2c5ce0" stroke-width="1.500"/><path d="M12.600 2.800L8.800 17.400M4.400 11.200L17.600 8.400" stroke="#f4f8ff" stroke-width="1.200"/><path d="M1.600 19.400l14.400-3.800 1.400 1-14 4z" fill="#2c4ca8" opacity="0.7"/><path d="M16.4 -1.6h5.4l-2.7 2.8z" fill="#000"/></g>
<g transform="translate(7.3,262)"><g transform="translate(1.600,1.800) scale(1.05)"><use href="#refreshB" x="0" y="0"/></g><path d="M14.6 -1.6h5.4l-2.7 2.8z" fill="#000"/></g>
<g transform="translate(33,262)"><ellipse cx="12" cy="19" rx="8" ry="1.500" fill="#000" opacity="0.25"/><path d="M2.400 5L10.600 2L18.600 4.400V13.600L10.600 17.600L2.400 14.400Z" fill="#8c8e8a" stroke="#3c3c3c" stroke-width="0.6"/><path d="M2.400 5L10.600 2L18.600 4.400L10.400 7.600Z" fill="#d4d6d0"/><path d="M10.400 7.600V17.600L18.600 13.600V4.400Z" fill="#5c5e5c"/><path d="M16.4 -1.6h5.4l-2.7 2.8z" fill="#000"/></g>
<g transform="translate(7.3,288)"><ellipse cx="10.600" cy="19.200" rx="7" ry="1.400" fill="#000" opacity="0.2"/><text x="4.400" y="16.600" font-family="Liberation Sans,sans-serif" font-weight="bold" font-size="20" fill="#4c7cd0" stroke="#2c4c94" stroke-width="0.4">?</text><path d="M14.6 -1.6h5.4l-2.7 2.8z" fill="#000"/></g>
<g transform="translate(33,288)"><path d="M2.600 3.400v15.600M19.400 3.400v15.600" stroke="#6c6c5c" stroke-width="1.200"/><path d="M4 6.400h14" stroke="#f4f000" stroke-width="1.600"/><path d="M2.800 6.400l3.400-2.400v4.800zM19.200 6.400l-3.400-2.400v4.800z" fill="#f4f000" stroke="#a8a400" stroke-width="0.3"/><path d="M16.4 -1.6h5.4l-2.7 2.8z" fill="#000"/></g>
<g transform="translate(7.3,314)"><ellipse cx="11" cy="19.400" rx="7.600" ry="1.400" fill="#000" opacity="0.25"/><path d="M2.600 4.400h15l-2 14.600h-11z" fill="#a8d0f0" stroke="#4c7cb4" stroke-width="0.8" fill-opacity="0.85"/><ellipse cx="10.100" cy="4.400" rx="7.500" ry="1.800" fill="#c8e0f8" stroke="#4c7cb4" stroke-width="0.8"/><path d="M8 1.400h4l0.600 3h-5.200z" fill="#f0e818" stroke="#a8a010" stroke-width="0.4"/><path d="M6.400 8.400l7 8M13.600 8.400l-7 8" stroke="#e8f060" stroke-width="1.800"/><path d="M14.6 -1.6h5.4l-2.7 2.8z" fill="#000"/></g>
<g transform="translate(33,314)"><ellipse cx="11" cy="19.400" rx="8" ry="1.400" fill="#000" opacity="0.15"/><g transform="translate(2.600,1.400)"><path d="M0.600 6.400L7.600 0.600V4Q15.400 4.400 14.400 12.600Q13.600 16 10 17.400Q13 13.600 11.600 10.600Q10.400 8.600 7.600 8.800V12.400Z" fill="url(#iGreyA)" stroke="#8c8c8c" stroke-width="0.4"/></g><path d="M16.4 -1.6h5.4l-2.7 2.8z" fill="#000"/></g>
<g transform="translate(7.3,340)"><rect x="-1.600" y="1" width="2" height="13" fill="#4c545c"/><rect x="0.600" y="1" width="1.800" height="15" fill="#8c949c"/><path d="M-0.600 14l2.600-3 1 8z" fill="#e8a020"/><g stroke="#8c3c1c" stroke-width="0.9" fill="none"><circle cx="9.800" cy="9.600" r="5.600"/><path d="M9.800 1v17.200M1.200 9.600h17.200M3.800 3.600l12 12M15.800 3.600l-12 12"/></g><circle cx="9.800" cy="9.600" r="2" fill="#f8c020"/><g stroke="#f88c10" stroke-width="1.600"><path d="M2 17.400l10-3M4 20l10-3.400M7 21.600l9-3"/><path d="M3 14.600l6 6M8 13.600l6 5.600" stroke-width="1"/></g><path d="M14.6 -1.6h5.4l-2.7 2.8z" fill="#000"/></g>
<g transform="translate(33,340)"><path d="M5 9h11l3 3v9h-14z" fill="url(#iDoc)" stroke="#111" stroke-width="1.200"/><rect x="7" y="18" width="6" height="2.400" fill="#fff" stroke="#333" stroke-width="0.5"/><path d="M0.600 5l2-2h4l1 1.400h9v3h-16z" fill="#f4d478" stroke="#c49c34" stroke-width="0.5"/><path d="M0.600 16.400l0.400-11 15.600 0.600-3 9.400z" fill="url(#iFold)" stroke="#c49c34" stroke-width="0.5"/><path d="M8 6q1-4.400 6-3.600l0.400-1.400 4 3.400-3.600 3.600-0.200-2q-2.400-0.600-3.600 1.400z" fill="url(#iGreenA)" stroke="#187c14" stroke-width="0.4"/></g>
<rect x="64" y="113" width="24" height="24" fill="#82859a"/>
<rect x="92" y="113" width="24" height="24" fill="#82859a"/>
<rect x="120" y="113" width="24" height="24" fill="#82859a"/>
<rect x="148" y="113" width="24" height="24" fill="#82859a"/>
<rect x="176" y="113" width="24" height="24" fill="#82859a"/>
<rect x="204" y="113" width="24" height="24" fill="#82859a"/>
<rect x="232" y="113" width="24" height="24" fill="#82859a"/>
<rect x="260" y="113" width="24" height="24" fill="#82859a"/>
<rect x="288" y="113" width="24" height="24" fill="#82859a"/>
<rect x="316" y="113" width="24" height="24" fill="#82859a"/>
<rect x="344" y="113" width="24" height="24" fill="#82859a"/>
<rect x="64" y="141" width="24" height="24" fill="#82859a"/>
<rect x="64" y="169" width="24" height="24" fill="#82859a"/>
<rect x="64.500" y="197.5" width="23" height="23" fill="#a4966c" stroke="#f0cc60" stroke-width="1.400"/>
<rect x="64" y="225" width="24" height="24" fill="#82859a"/>
<rect x="64" y="253" width="24" height="24" fill="#82859a"/>
<g transform="translate(64,113)"><rect x="3.400" y="4" width="17.400" height="3.600" rx="0.600" fill="#3c5c98"/><rect x="3.400" y="10.200" width="17.400" height="3.600" rx="0.600" fill="#3c5c98"/><rect x="3.400" y="16.400" width="17.400" height="3.600" rx="0.600" fill="#3c5c98"/><path d="M4 5.800h16M4 12h16M4 18.200h16" stroke="#5c7cb4" stroke-width="0.8"/></g>
<g transform="translate(92,113)"><rect x="7" y="8" width="10.600" height="9" fill="url(#iSq)" stroke="#5c5c5c" stroke-width="0.9"/><use href="#gcorner" x="3" y="3.8"/><g transform="translate(21.800,3.800) scale(-1,1)"><use href="#gcorner" x="0" y="0"/></g><g transform="translate(3,21.400) scale(1,-1)"><use href="#gcorner" x="0" y="0"/></g><g transform="translate(21.800,21.400) scale(-1,-1)"><use href="#gcorner" x="0" y="0"/></g></g>
<g transform="translate(120,113)"><g opacity="0.6"><path d="M5.600 6h5M5 9.400h5M6 12.600h4" stroke="#c8d0e0" stroke-width="1.500"/></g><g transform="translate(4.600,3.400) scale(0.95)"><use href="#mag" x="0" y="0"/></g></g>
<g transform="translate(148,113)"><path d="M2.600 13.400L10.800 8.400L19.400 11.400L11 19.600Z" fill="none" stroke="#6c6c78" stroke-width="0.6"/><path d="M10.800 14V5" stroke="#1c74f4" stroke-width="1.800"/><path d="M10.800 2.600l2.400 3.600h-4.800z" fill="#1c74f4"/><path d="M10.800 14L19 8.400" stroke="#48b428" stroke-width="1.500"/><path d="M21 7l-1.400 3.400-2.400-3z" fill="#48b428"/><path d="M10.800 14L18.400 19.600" stroke="#e01818" stroke-width="1.700"/><path d="M20.600 21.200l-4.200-0.400 2.200-3z" fill="#e01818"/><circle cx="10.800" cy="14" r="1.700" fill="url(#iBall)" stroke="#555" stroke-width="0.4"/></g>
<g transform="translate(176,113)"><polygon points="3,7.4 12.4,3.4 21,6.4 12,10.6" fill="url(#vg)"/><g fill="none" stroke="#0a0a0a" stroke-width="1.300" stroke-linejoin="round"><polygon points="3,7.4 12.4,3.4 21,6.4 12,10.6"/><polygon points="3,17.4 12.4,13.4 21,16.4 12,21.4"/><path d="M3 7.4V17.4M12.4 3.4V13.4M21 6.4V16.4M12 10.6V21.4"/></g></g>
<g transform="translate(204,113)"><polygon points="3,17.4 12.4,13.4 21,16.4 12,21.4" fill="url(#vg)"/><g fill="none" stroke="#0a0a0a" stroke-width="1.300" stroke-linejoin="round"><polygon points="3,7.4 12.4,3.4 21,6.4 12,10.6"/><polygon points="3,17.4 12.4,13.4 21,16.4 12,21.4"/><path d="M3 7.4V17.4M12.4 3.4V13.4M21 6.4V16.4M12 10.6V21.4"/></g></g>
<g transform="translate(232,113)"><polygon points="3,7.4 12,10.6 12,21.4 3,17.4" fill="url(#vg)"/><g fill="none" stroke="#0a0a0a" stroke-width="1.300" stroke-linejoin="round"><polygon points="3,7.4 12.4,3.4 21,6.4 12,10.6"/><polygon points="3,17.4 12.4,13.4 21,16.4 12,21.4"/><path d="M3 7.4V17.4M12.4 3.4V13.4M21 6.4V16.4M12 10.6V21.4"/></g></g>
<g transform="translate(260,113)"><polygon points="12,10.6 21,6.4 21,16.4 12,21.4" fill="url(#vg)"/><g fill="none" stroke="#0a0a0a" stroke-width="1.300" stroke-linejoin="round"><polygon points="3,7.4 12.4,3.4 21,6.4 12,10.6"/><polygon points="3,17.4 12.4,13.4 21,16.4 12,21.4"/><path d="M3 7.4V17.4M12.4 3.4V13.4M21 6.4V16.4M12 10.6V21.4"/></g></g>
<g transform="translate(288,113)"><polygon points="3,7.4 12.4,3.4 12.4,13.4 3,17.4" fill="url(#vg)"/><g fill="none" stroke="#0a0a0a" stroke-width="1.300" stroke-linejoin="round"><polygon points="3,7.4 12.4,3.4 21,6.4 12,10.6"/><polygon points="3,17.4 12.4,13.4 21,16.4 12,21.4"/><path d="M3 7.4V17.4M12.4 3.4V13.4M21 6.4V16.4M12 10.6V21.4"/></g></g>
<g transform="translate(316,113)"><polygon points="12.4,3.4 21,6.4 21,16.4 12.4,13.4" fill="url(#vg)"/><g fill="none" stroke="#0a0a0a" stroke-width="1.300" stroke-linejoin="round"><polygon points="3,7.4 12.4,3.4 21,6.4 12,10.6"/><polygon points="3,17.4 12.4,13.4 21,16.4 12,21.4"/><path d="M3 7.4V17.4M12.4 3.4V13.4M21 6.4V16.4M12 10.6V21.4"/></g></g>
<g transform="translate(344,113)"><polygon points="3,7.4 12.4,3.4 21,6.4 12,10.6" fill="#58d830"/><polygon points="3,7.4 12,10.6 12,21.4 3,17.4" fill="#38b818"/><polygon points="12,10.6 21,6.4 21,16.4 12,21.4" fill="#209808"/><path d="M3 7.4L12 10.6L21 6.4M12 10.6V21.4" fill="none" stroke="#187808" stroke-width="0.8"/></g>
<g transform="translate(64,141)"><g transform="translate(8.500,4.200) scale(0.93)"><use href="#cylW" x="0" y="0"/></g></g>
<g transform="translate(64,169)"><g transform="translate(8.500,4.200) scale(0.93)"><use href="#cylW2" x="0" y="0"/></g></g>
<g transform="translate(64,197)"><g transform="translate(8.500,4.200) scale(0.93)"><use href="#cylB" x="0" y="0"/></g></g>
<g transform="translate(64,225)"><g transform="translate(8.500,4.200) scale(0.93)"><use href="#cylPD" x="0" y="0"/></g></g>
<g transform="translate(64,253)"><g transform="translate(8.500,4.200) scale(0.93)"><use href="#cylM" x="0" y="0"/></g></g>
<g transform="translate(1182,1022)"><rect x="0.500" y="0.500" width="15.600" height="15.600" fill="#c8ccd8" stroke="#6c7088" stroke-width="1"/><path d="M3 8Q3 3 8.400 3Q11 3 12.400 4.600L13.600 3L14 8L9.400 7.400L10.800 6Q9.800 5.200 8.400 5.200Q5.600 5.400 5.400 8Z" fill="#f08c9c" stroke="#d04c5c" stroke-width="0.4"/><path d="M13.600 9Q13.600 14 8.200 14Q5.600 14 4.200 12.400L3 14L2.600 9L7.200 9.600L5.800 11Q6.800 11.800 8.200 11.800Q11 11.600 11.200 9Z" fill="#f08c9c" stroke="#d04c5c" stroke-width="0.4"/></g>
<g transform="translate(1212,1021)"><rect x="0" y="0" width="18" height="18" fill="#ffe474"/><path d="M2 1l3 3 1-3.600 1.600 3.400 3.400-2.400-1 3.600 4 0.400-3.600 2 2.400 3-4-0.600-0.400 3.600-2.400-3-3 2.400 0.600-3.600-3.600-0.400 3-2z" fill="#d868c8" opacity="0.85"/><circle cx="6" cy="5.600" r="2" fill="#f8f040"/><path d="M8 7.600l7.600 5-3 0.400 3 4-1.600 1-2.800-4.200-2 2z" fill="#e8e0e8" stroke="#8c7c6c" stroke-width="0.6"/></g>
<g transform="translate(1245,1022)"><path d="M1.600 7h9v10h-9z" fill="#dce4f8" stroke="#5c6c9c" stroke-width="0.7"/><path d="M3 9.600h3M4.500 8v3M3 14h3M7.600 13a1.500 1.500 0 1 0 0.100 0" stroke="#2c5cd0" stroke-width="0.9" fill="none"/><path d="M3 6q2-4 5.600-5l4-1q2.600 0 2.600 2.400l0.200 3-3.400 1-2.800 0.400-2.400 1.400z" fill="#f0b878" stroke="#a8682c" stroke-width="0.5"/><path d="M3.600 6.400l5.600-3M5 7.400l5-3M4 4l5 4" stroke="#a8682c" stroke-width="0.4"/></g>
<g transform="translate(1276,1021)"><ellipse cx="8" cy="17.400" rx="6.400" ry="1.400" fill="#000" opacity="0.25"/><text x="1.600" y="16" font-family="Liberation Sans,sans-serif" font-weight="bold" font-size="19" fill="#4c7cd0" stroke="#2c4c94" stroke-width="0.4">?</text></g>
<g transform="translate(1304,1021)"><path d="M2.600 3.400l3.600-1.800 3.600 1.400v4.600l-3.600 2-3.600-1.600z" fill="#4c8cf0" stroke="#1c4cb0" stroke-width="0.6"/><path d="M2.600 3.400l3.600 1.600 3.600-2M6.200 5v4.600" fill="none" stroke="#a8ccff" stroke-width="0.6"/><path d="M9 9.400l4-2 4 1.600v5l-4 2.400-4-1.800z" fill="#6cb4c4" stroke="#1c2c3c" stroke-width="0.8"/><path d="M9 9.400l4 1.800 4-2.200M13 11.200v5.200" fill="none" stroke="#1c2c3c" stroke-width="0.7"/><path d="M0.600 12h7M3.600 9l4 3-4 3M1.600 9.600l5 5M1.600 14.400l5-5" stroke="#f01818" stroke-width="1.200" fill="none"/></g>
<g transform="translate(1336,1021)"><rect x="0" y="0" width="18" height="18" fill="#ffe474"/><path d="M2 4.600L9 2L16 4.600L9 7.600Z" fill="#e838e8" stroke="#b818b8" stroke-width="0.5"/><path d="M2 4.600V13L9 17V7.600Z" fill="#8cb4a4" stroke="#2c4cc8" stroke-width="0.9"/><path d="M16 4.600V13L9 17V7.600Z" fill="#7ca494" stroke="#2c4cc8" stroke-width="0.9"/></g>
<rect x="1371.500" y="1026" width="9" height="11" fill="#e8ece8" stroke="#5c7c6c" stroke-width="1.200"/>
<circle cx="1407.500" cy="1029" r="7" fill="#f4f8f4" stroke="#1c8c1c" stroke-width="2"/><path d="M1404 1029h7l-3.500 4z" fill="#2c3cb0"/>
<rect x="1430.500" y="1026" width="7" height="11" fill="#e4e4ec" stroke="#7c7c94" stroke-width="1.200"/><rect x="1438.500" y="1026" width="7" height="11" fill="#e4e4ec" stroke="#7c7c94" stroke-width="1.200"/>
<circle cx="1900.500" cy="1010" r="6.500" fill="#1830c8" stroke="#0c1868" stroke-width="0.5"/><path d="M1896 1006q3-2.400 5 0q1 2-1.600 3q-1 2-3 1q-1.600-2-0.400-4zM1902 1011q2.400-1 3.400 1q-0.400 2.400-2.400 3.400q-1.600-1.600-1-4.400zM1903 1004.600q2 0.600 2.800 2.400l-2.400 0.400z" fill="#30c830"/><circle cx="1898.400" cy="1007" r="1.200" fill="#fff" opacity="0.7"/>
<rect x="1383.500" y="1010" width="181" height="22" rx="2" fill="#fff" stroke="#d0d0d6" stroke-width="1"/>
<text x="1392.600" y="1027" font-family="Liberation Sans,Noto Sans CJK SC,sans-serif" font-weight="bold" font-size="15.500" fill="#1a78d0">中</text>
<g transform="translate(1373,1019.500) rotate(-14)"><rect x="-12" y="-12" width="24" height="24" rx="3.400" fill="#f4521c"/><path d="M6.400 -6.600Q-1 -9.600 -6.400 -6.400Q-9.400 -3 -4 -0.800L2.600 1Q5.400 2.400 2 4Q-3 5.600 -8 3.400L-8.400 6.400Q-2 9 4.400 6.600Q9 3.400 5 0L-2.600 -2.400Q-5 -3.600 -2 -4.600Q2 -5.400 6 -3.600Z" fill="#fff"/></g>
<circle cx="1418.500" cy="1017.500" r="1.700" fill="none" stroke="#1a78d0" stroke-width="1.200"/><path d="M1424.600 1022.600q2.400 0.400 1.600 2.800q-0.600 1.600-2.200 2.200l-0.400-0.800q1.400-0.800 1.200-2q-1.400 0-1.400-1.200q0.200-1 1.200-1z" fill="#1a78d0"/>
<circle cx="1444" cy="1021.200" r="7.300" fill="none" stroke="#1a78d0" stroke-width="1.500"/><path d="M1441.400 1017v3.400M1446.600 1017v3.400" stroke="#1a78d0" stroke-width="1.500" stroke-linecap="round"/><path d="M1440 1023.400q4 4 8 0" fill="none" stroke="#1a78d0" stroke-width="1.400" stroke-linecap="round"/>
<rect x="1463.400" y="1013.600" width="5.600" height="10.400" rx="2.800" fill="#1a78d0"/><path d="M1460.800 1020.600q0.400 5 5.400 5q5 0 5.400-5" fill="none" stroke="#1a78d0" stroke-width="1.400"/><path d="M1466.200 1025.600v2.600M1463.200 1028.400h6" stroke="#1a78d0" stroke-width="1.400"/>
<rect x="1480.600" y="1015.400" width="15.400" height="11.400" rx="1.600" fill="#1a78d0"/><path d="M1482.600 1018h1.600M1485.600 1018h1.600M1488.600 1018h1.600M1491.600 1018h1.600M1482.600 1020.800h1.600M1485.600 1020.800h1.600M1488.600 1020.800h1.600M1491.600 1020.800h1.600M1484.600 1024h7.400" stroke="#fff" stroke-width="1.300"/>
<circle cx="1510.600" cy="1016.800" r="2.900" fill="#c4ccd8"/><path d="M1504.400 1026.400q0.600-6 6.200-6q5.600 0 6.200 6z" fill="#c4ccd8"/><rect x="1512.400" y="1022.600" width="6.400" height="5.600" rx="1" fill="#fff" stroke="#c4ccd8" stroke-width="0.8"/><path d="M1514.200 1024h2.800l-1.800 3.400" fill="none" stroke="#a4acbc" stroke-width="0.8"/>
<path d="M1528.600 1014.400l2.800-0.800q1.400 1.600 2.800 0l2.800 0.800l3 3.400l-2.200 2l-1.200-1v8.600h-7.600v-8.600l-1.200 1l-2.200-2z" fill="#1a78d0"/>
<rect x="1547.400" y="1015" width="5.800" height="5.800" fill="#1a78d0"/><rect x="1555" y="1015" width="5.800" height="5.800" fill="none" stroke="#1a78d0" stroke-width="1.200"/><rect x="1547.400" y="1022.400" width="5.800" height="5.800" fill="#1a78d0"/><rect x="1555" y="1022.400" width="5.800" height="5.800" fill="#1a78d0"/>
</svg>
</body>
</html>
